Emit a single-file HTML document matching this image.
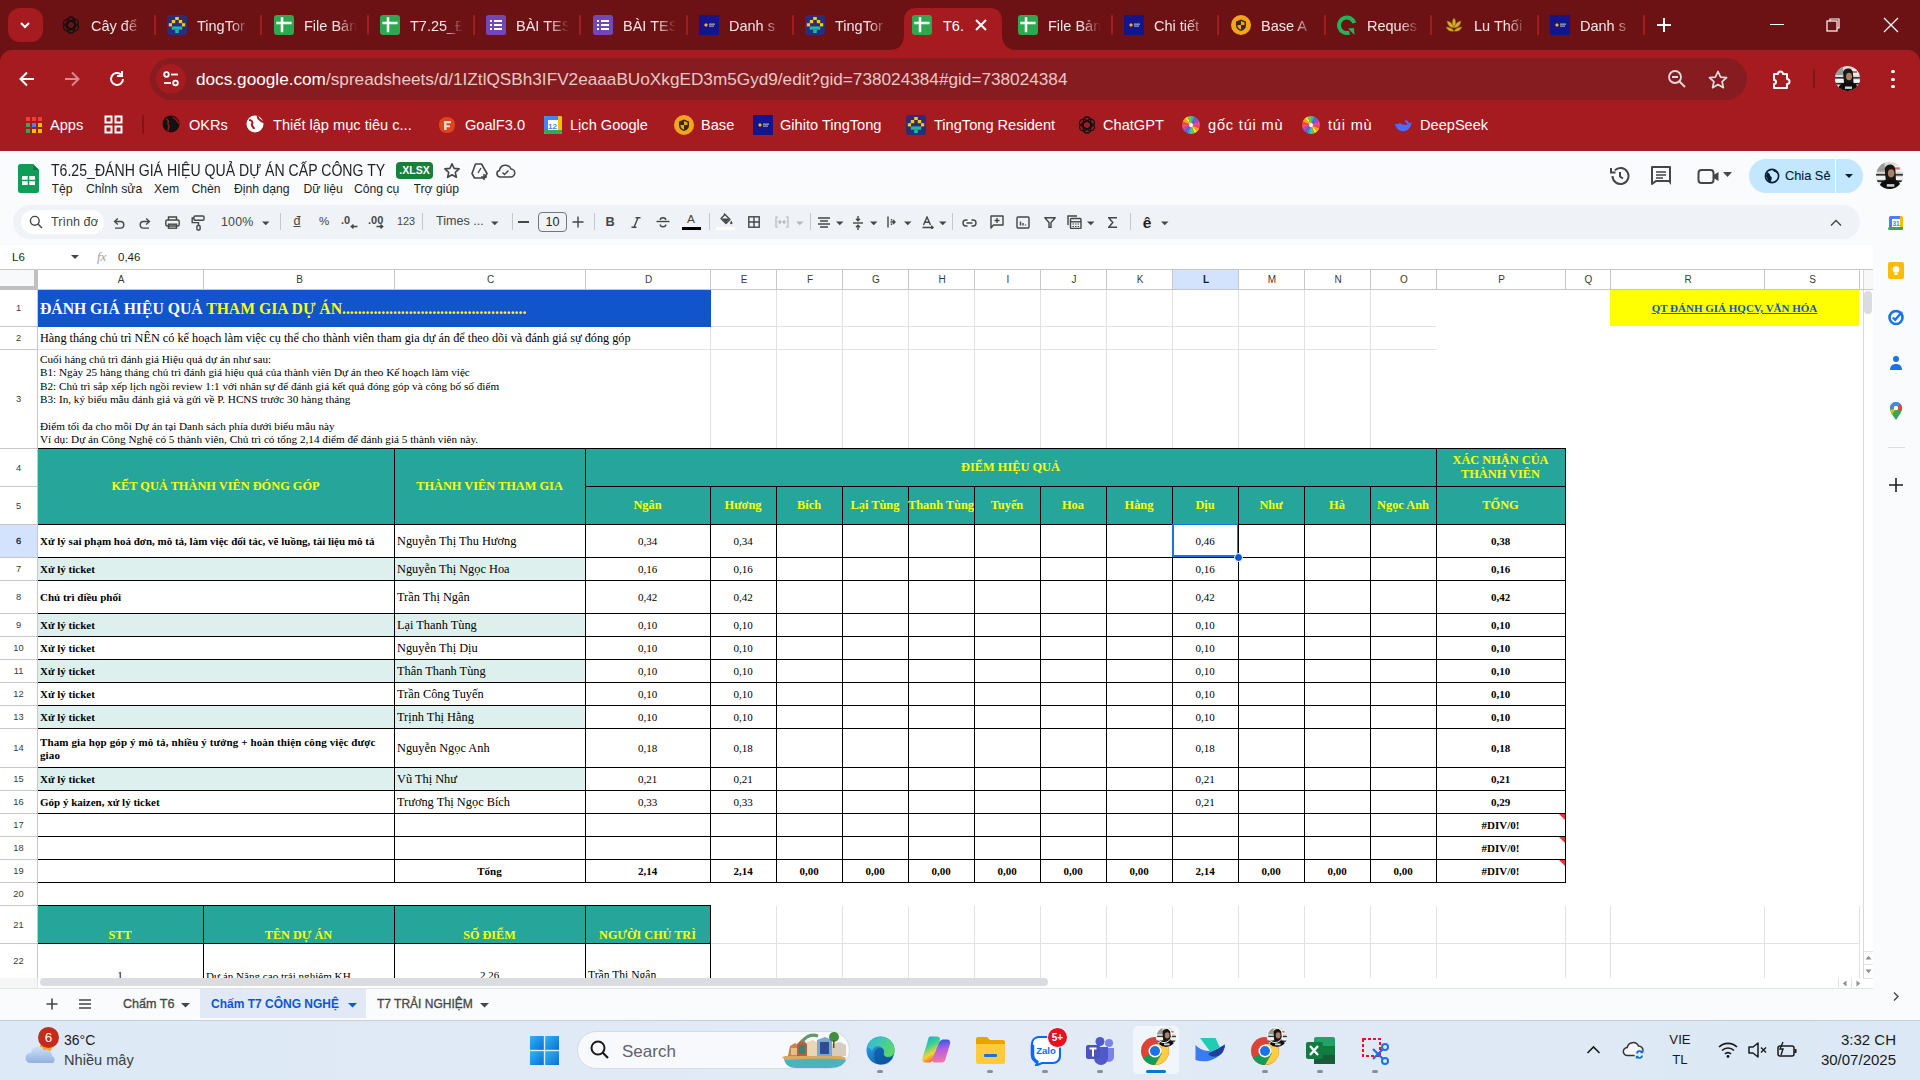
<!DOCTYPE html><html><head><meta charset="utf-8"><style>
*{margin:0;padding:0}
body{width:1920px;height:1080px;overflow:hidden;position:relative;background:#f9fbfd;font-family:SANS,sans-serif;color:#000}
.t{position:absolute;overflow:hidden;white-space:nowrap}
</style></head><body><div style="position:absolute;left:0px;top:0px;width:1920px;height:50px;background:#6d1214"></div>
<div style="position:absolute;left:0px;top:50px;width:1920px;height:101px;background:#a61b1f"></div>
<div style="position:absolute;left:8px;top:8px;width:35px;height:34px;background:#a61b1f;border-radius:12px"></div>
<svg style="position:absolute;left:18px;top:18px;" width="14" height="14" viewBox="0 0 14 14"><path d="M3 5l4 4 4-4" stroke="#fff" stroke-width="2" fill="none"/></svg>
<svg style="position:absolute;left:888.5px;top:7px;" width="128" height="44" viewBox="0 0 128 44"><path d="M0 43 Q14 43 15 29 L15 14 Q15 1 28 1 L100 1 Q113 1 113 14 L113 29 Q114 43 128 43 Z" fill="#a61b1f"/></svg>
<svg style="position:absolute;left:61px;top:15px;" width="20" height="20" viewBox="0 0 20 20"><g fill="none" stroke="#141010" stroke-width="1.3"><rect x="6.3" y="2" width="7.4" height="12" rx="3.7" transform="rotate(0 10 10)"/><rect x="6.3" y="2" width="7.4" height="12" rx="3.7" transform="rotate(60 10 10)"/><rect x="6.3" y="2" width="7.4" height="12" rx="3.7" transform="rotate(120 10 10)"/><rect x="6.3" y="2" width="7.4" height="12" rx="3.7" transform="rotate(180 10 10)"/><rect x="6.3" y="2" width="7.4" height="12" rx="3.7" transform="rotate(240 10 10)"/><rect x="6.3" y="2" width="7.4" height="12" rx="3.7" transform="rotate(300 10 10)"/></g></svg>
<div class="t" style="left:91px;top:8px;width:54px;height:36px;color:#f3e5e5;font:14.5px/36px 'Liberation Sans';-webkit-mask-image:linear-gradient(90deg,#000 62%,transparent 98%)">Cây để</div>
<div style="position:absolute;left:154px;top:15px;width:2px;height:20px;background:#a51c1f;border-radius:1px"></div>
<svg style="position:absolute;left:167px;top:15px;" width="20" height="20" viewBox="0 0 20 20"><rect width="20" height="20" rx="3" fill="#2b2d78"/><g fill="#f7c81e"><rect x="8.2" y="2" width="3.6" height="3"/><rect x="4.8" y="5" width="3.4" height="3.2"/><rect x="11.8" y="5" width="3.4" height="3.2"/><rect x="1.8" y="8.2" width="3.2" height="3.2"/><rect x="15" y="8.2" width="3.2" height="3.2"/></g><rect x="4.8" y="11.4" width="10.4" height="3.3" fill="#22b5a5"/><rect x="8.2" y="14.7" width="3.6" height="3.3" fill="#22b5a5"/></svg>
<div class="t" style="left:197px;top:8px;width:54px;height:36px;color:#f3e5e5;font:14.5px/36px 'Liberation Sans';-webkit-mask-image:linear-gradient(90deg,#000 62%,transparent 98%)">TingTor</div>
<div style="position:absolute;left:260px;top:15px;width:2px;height:20px;background:#a51c1f;border-radius:1px"></div>
<svg style="position:absolute;left:274px;top:15px;" width="20" height="20" viewBox="0 0 20 20"><rect width="20" height="20" rx="3" fill="#2ea84f"/><path d="M8 2.3v15M2.3 7.9h15.3" stroke="#fff" stroke-width="2.5"/></svg>
<div class="t" style="left:304px;top:8px;width:54px;height:36px;color:#f3e5e5;font:14.5px/36px 'Liberation Sans';-webkit-mask-image:linear-gradient(90deg,#000 62%,transparent 98%)">File Bản</div>
<div style="position:absolute;left:367px;top:15px;width:2px;height:20px;background:#a51c1f;border-radius:1px"></div>
<svg style="position:absolute;left:380px;top:15px;" width="20" height="20" viewBox="0 0 20 20"><rect width="20" height="20" rx="3" fill="#2ea84f"/><path d="M8 2.3v15M2.3 7.9h15.3" stroke="#fff" stroke-width="2.5"/></svg>
<div class="t" style="left:410px;top:8px;width:54px;height:36px;color:#f3e5e5;font:14.5px/36px 'Liberation Sans';-webkit-mask-image:linear-gradient(90deg,#000 62%,transparent 98%)">T7.25_Đ</div>
<div style="position:absolute;left:473px;top:15px;width:2px;height:20px;background:#a51c1f;border-radius:1px"></div>
<svg style="position:absolute;left:486px;top:15px;" width="20" height="20" viewBox="0 0 20 20"><rect width="20" height="20" rx="2.5" fill="#7248b9"/><g fill="#fff"><rect x="4" y="5" width="2" height="2"/><rect x="4" y="9" width="2" height="2"/><rect x="4" y="13" width="2" height="2"/><rect x="8" y="5" width="8" height="2"/><rect x="8" y="9" width="8" height="2"/><rect x="8" y="13" width="8" height="2"/></g></svg>
<div class="t" style="left:516px;top:8px;width:54px;height:36px;color:#f3e5e5;font:14.5px/36px 'Liberation Sans';-webkit-mask-image:linear-gradient(90deg,#000 62%,transparent 98%)">BÀI TES</div>
<div style="position:absolute;left:579px;top:15px;width:2px;height:20px;background:#a51c1f;border-radius:1px"></div>
<svg style="position:absolute;left:593px;top:15px;" width="20" height="20" viewBox="0 0 20 20"><rect width="20" height="20" rx="2.5" fill="#7248b9"/><g fill="#fff"><rect x="4" y="5" width="2" height="2"/><rect x="4" y="9" width="2" height="2"/><rect x="4" y="13" width="2" height="2"/><rect x="8" y="5" width="8" height="2"/><rect x="8" y="9" width="8" height="2"/><rect x="8" y="13" width="8" height="2"/></g></svg>
<div class="t" style="left:623px;top:8px;width:54px;height:36px;color:#f3e5e5;font:14.5px/36px 'Liberation Sans';-webkit-mask-image:linear-gradient(90deg,#000 62%,transparent 98%)">BÀI TES</div>
<div style="position:absolute;left:686px;top:15px;width:2px;height:20px;background:#a51c1f;border-radius:1px"></div>
<svg style="position:absolute;left:699px;top:15px;" width="20" height="20" viewBox="0 0 20 20"><rect width="20" height="20" fill="#14148c"/><path d="M5 10l2-2 2 2-2 2z" fill="#f5b700"/><rect x="10" y="8.5" width="6" height="1.3" fill="#9ab"/><rect x="10" y="10.5" width="5" height="1.2" fill="#9ab"/></svg>
<div class="t" style="left:729px;top:8px;width:54px;height:36px;color:#f3e5e5;font:14.5px/36px 'Liberation Sans';-webkit-mask-image:linear-gradient(90deg,#000 62%,transparent 98%)">Danh s</div>
<div style="position:absolute;left:792px;top:15px;width:2px;height:20px;background:#a51c1f;border-radius:1px"></div>
<svg style="position:absolute;left:805px;top:15px;" width="20" height="20" viewBox="0 0 20 20"><rect width="20" height="20" rx="3" fill="#2b2d78"/><g fill="#f7c81e"><rect x="8.2" y="2" width="3.6" height="3"/><rect x="4.8" y="5" width="3.4" height="3.2"/><rect x="11.8" y="5" width="3.4" height="3.2"/><rect x="1.8" y="8.2" width="3.2" height="3.2"/><rect x="15" y="8.2" width="3.2" height="3.2"/></g><rect x="4.8" y="11.4" width="10.4" height="3.3" fill="#22b5a5"/><rect x="8.2" y="14.7" width="3.6" height="3.3" fill="#22b5a5"/></svg>
<div class="t" style="left:835px;top:8px;width:54px;height:36px;color:#f3e5e5;font:14.5px/36px 'Liberation Sans';-webkit-mask-image:linear-gradient(90deg,#000 62%,transparent 98%)">TingTor</div>
<svg style="position:absolute;left:912px;top:15px;" width="20" height="20" viewBox="0 0 20 20"><rect width="20" height="20" rx="3" fill="#2ea84f"/><path d="M8 2.3v15M2.3 7.9h15.3" stroke="#fff" stroke-width="2.5"/></svg>
<div class="t" style="left:943px;top:8px;width:40px;height:36px;color:#fff;font:14.5px/36px 'Liberation Sans'">T6.</div>
<svg style="position:absolute;left:974px;top:18px;" width="14" height="14" viewBox="0 0 14 14"><path d="M2 2L12 12M12 2L2 12" stroke="#fff" stroke-width="2"/></svg>
<svg style="position:absolute;left:1018px;top:15px;" width="20" height="20" viewBox="0 0 20 20"><rect width="20" height="20" rx="3" fill="#2ea84f"/><path d="M8 2.3v15M2.3 7.9h15.3" stroke="#fff" stroke-width="2.5"/></svg>
<div class="t" style="left:1048px;top:8px;width:54px;height:36px;color:#f3e5e5;font:14.5px/36px 'Liberation Sans';-webkit-mask-image:linear-gradient(90deg,#000 62%,transparent 98%)">File Bản</div>
<div style="position:absolute;left:1111px;top:15px;width:2px;height:20px;background:#a51c1f;border-radius:1px"></div>
<svg style="position:absolute;left:1124px;top:15px;" width="20" height="20" viewBox="0 0 20 20"><rect width="20" height="20" fill="#14148c"/><path d="M5 10l2-2 2 2-2 2z" fill="#f5b700"/><rect x="10" y="8.5" width="6" height="1.3" fill="#9ab"/><rect x="10" y="10.5" width="5" height="1.2" fill="#9ab"/></svg>
<div class="t" style="left:1154px;top:8px;width:54px;height:36px;color:#f3e5e5;font:14.5px/36px 'Liberation Sans';-webkit-mask-image:linear-gradient(90deg,#000 62%,transparent 98%)">Chi tiết</div>
<div style="position:absolute;left:1217px;top:15px;width:2px;height:20px;background:#a51c1f;border-radius:1px"></div>
<svg style="position:absolute;left:1231px;top:15px;" width="20" height="20" viewBox="0 0 20 20"><circle cx="10" cy="10" r="10" fill="#f7a41d"/><path d="M10 4.5l5 2v4c0 3-2.3 4.6-5 5.5-2.7-.9-5-2.5-5-5.5v-4z" fill="#3a2a10"/><path d="M10 6l3.5 1.4V10H10zM10 10v4.6C8 14 6.5 12.6 6.5 10.5V10z" fill="#f7a41d"/></svg>
<div class="t" style="left:1261px;top:8px;width:54px;height:36px;color:#f3e5e5;font:14.5px/36px 'Liberation Sans';-webkit-mask-image:linear-gradient(90deg,#000 62%,transparent 98%)">Base A</div>
<div style="position:absolute;left:1324px;top:15px;width:2px;height:20px;background:#a51c1f;border-radius:1px"></div>
<svg style="position:absolute;left:1337px;top:15px;" width="20" height="20" viewBox="0 0 20 20"><path d="M12.5 17.6A7.8 7.8 0 1 1 17.3 8" stroke="#1fb55a" stroke-width="4" fill="none"/><path d="M11 13.5l6.5 6.5-0.5-7z" fill="#1fb55a"/></svg>
<div class="t" style="left:1367px;top:8px;width:54px;height:36px;color:#f3e5e5;font:14.5px/36px 'Liberation Sans';-webkit-mask-image:linear-gradient(90deg,#000 62%,transparent 98%)">Reques</div>
<div style="position:absolute;left:1430px;top:15px;width:2px;height:20px;background:#a51c1f;border-radius:1px"></div>
<svg style="position:absolute;left:1444px;top:15px;" width="20" height="20" viewBox="0 0 20 20"><g fill="#d4ac2b" stroke="#8a6d12" stroke-width="0.5"><path d="M10 3c2 2.5 2.5 6 0 10-2.5-4-2-7.5 0-10z"/><path d="M3 6c3.5.5 6 3 7 7-4-.3-6.5-3-7-7z"/><path d="M17 6c-3.5.5-6 3-7 7 4-.3 6.5-3 7-7z"/><path d="M2 12c3 0 6 1 8 4-3.5 1-6.5-.5-8-4z"/><path d="M18 12c-3 0-6 1-8 4 3.5 1 6.5-.5 8-4z"/></g></svg>
<div class="t" style="left:1474px;top:8px;width:54px;height:36px;color:#f3e5e5;font:14.5px/36px 'Liberation Sans';-webkit-mask-image:linear-gradient(90deg,#000 62%,transparent 98%)">Lu Thối</div>
<div style="position:absolute;left:1537px;top:15px;width:2px;height:20px;background:#a51c1f;border-radius:1px"></div>
<svg style="position:absolute;left:1550px;top:15px;" width="20" height="20" viewBox="0 0 20 20"><rect width="20" height="20" fill="#14148c"/><path d="M5 10l2-2 2 2-2 2z" fill="#f5b700"/><rect x="10" y="8.5" width="6" height="1.3" fill="#9ab"/><rect x="10" y="10.5" width="5" height="1.2" fill="#9ab"/></svg>
<div class="t" style="left:1580px;top:8px;width:54px;height:36px;color:#f3e5e5;font:14.5px/36px 'Liberation Sans';-webkit-mask-image:linear-gradient(90deg,#000 62%,transparent 98%)">Danh s</div>
<div style="position:absolute;left:1643px;top:15px;width:2px;height:20px;background:#a51c1f;border-radius:1px"></div>
<svg style="position:absolute;left:1655px;top:16px;" width="18" height="18" viewBox="0 0 18 18"><path d="M9 2v14M2 9h14" stroke="#fff" stroke-width="2"/></svg>
<div style="position:absolute;left:1770px;top:24px;width:14px;height:1.2px;background:#fff"></div>
<svg style="position:absolute;left:1825px;top:17px;" width="16" height="16" viewBox="0 0 16 16"><rect x="2" y="4" width="10" height="10" fill="none" stroke="#fff" stroke-width="1.2"/><path d="M5 4V2h9v9h-2" fill="none" stroke="#fff" stroke-width="1.2"/></svg>
<svg style="position:absolute;left:1883px;top:17px;" width="16" height="16" viewBox="0 0 16 16"><path d="M1 1L15 15M15 1L1 15" stroke="#fff" stroke-width="1.3"/></svg>
<div style="position:absolute;left:0px;top:50px;width:12px;height:12px;background:#6d1214"></div>
<div style="position:absolute;left:0px;top:50px;width:12px;height:12px;background:#a61b1f;border-top-left-radius:12px"></div>
<div style="position:absolute;left:1908px;top:50px;width:12px;height:12px;background:#6d1214"></div>
<div style="position:absolute;left:1908px;top:50px;width:12px;height:12px;background:#a61b1f;border-top-right-radius:12px"></div>
<svg style="position:absolute;left:17px;top:69px;" width="20" height="20" viewBox="0 0 20 20"><path d="M17 10H4M10 3.5L3.5 10 10 16.5" stroke="#fff" stroke-width="2" fill="none"/></svg>
<svg style="position:absolute;left:62px;top:69px;" width="20" height="20" viewBox="0 0 20 20"><path d="M3 10h13M10 3.5L16.5 10 10 16.5" stroke="#d98a8a" stroke-width="2" fill="none"/></svg>
<svg style="position:absolute;left:107px;top:69px;" width="20" height="20" viewBox="0 0 20 20"><path d="M16 10a6 6 0 1 1-2-4.5" stroke="#fff" stroke-width="2" fill="none"/><path d="M15 2v5h-5" stroke="#fff" stroke-width="2" fill="none"/></svg>
<div style="position:absolute;left:150px;top:58px;width:1597px;height:42px;background:#861c1f;border-radius:21px"></div>
<div style="position:absolute;left:156px;top:64px;width:30px;height:30px;background:#a61b1f;border-radius:50%"></div>
<svg style="position:absolute;left:162px;top:70px;" width="18" height="18" viewBox="0 0 18 18"><circle cx="4.5" cy="4.5" r="2.3" stroke="#fff" stroke-width="1.8" fill="none"/><path d="M9 4.5h7" stroke="#fff" stroke-width="1.8"/><circle cx="13.5" cy="13" r="2.3" stroke="#fff" stroke-width="1.8" fill="none"/><path d="M2 13h7" stroke="#fff" stroke-width="1.8"/></svg>
<div class="t" style="left:196px;top:58px;width:1000px;height:42px;color:#e6c8c8;font:17.2px/42px 'Liberation Sans'"><span style="color:#fff">docs.google.com</span>/spreadsheets/d/1IZtlQSBh3IFV2eaaaBUoXkgED3m5Gyd9/edit?gid=738024384#gid=738024384</div>
<svg style="position:absolute;left:1667px;top:69px;" width="22" height="22" viewBox="0 0 22 22"><circle cx="8" cy="8" r="6" stroke="#ddd" stroke-width="1.8" fill="none"/><path d="M5 8h6M12.5 12.5L18 18" stroke="#ddd" stroke-width="1.8"/></svg>
<svg style="position:absolute;left:1707px;top:69px;" width="22" height="22" viewBox="0 0 22 22"><path d="M11 2.5l2.6 5.6 6 .6-4.5 4 1.3 6-5.4-3.2-5.4 3.2 1.3-6-4.5-4 6-.6z" stroke="#ddd" stroke-width="1.7" fill="none" stroke-linejoin="round"/></svg>
<svg style="position:absolute;left:1770px;top:68px;" width="24" height="24" viewBox="0 0 24 24"><path d="M4 6h4a2.5 2.5 0 0 1 5 0h4v5a2.5 2.5 0 0 1 0 5v4H4v-4a2 2 0 0 0 0-4z" stroke="#fff" stroke-width="2" fill="none" stroke-linejoin="round"/></svg>
<div style="position:absolute;left:1813px;top:69px;width:2px;height:19px;background:#7a1518;border-radius:1px"></div>
<svg style="position:absolute;left:1835px;top:66px;" width="25.0" height="25.0" viewBox="0 0 25 25"><defs><clipPath id="av1"><circle cx="12.5" cy="12.5" r="12.5"/></clipPath></defs><g clip-path="url(#av1)"><rect width="25" height="25" fill="#d9d9d9"/><rect x="0" y="0" width="8" height="9" fill="#9a9a9a"/><rect x="16" y="3" width="9" height="6" fill="#f0f0f0"/><rect x="17" y="5" width="5" height="2" fill="#d66"/><rect x="0" y="11" width="25" height="1.6" fill="#333"/><rect x="0" y="13" width="9" height="3" fill="#f2f2f2"/><rect x="17" y="14" width="8" height="2.5" fill="#f5f5f5"/><rect x="0" y="17" width="25" height="1.5" fill="#222"/><path d="M8 6c1-3 4-4 6.5-3.5 2.5.5 3.5 3 3.5 5.5l.5 9H9z" fill="#1b1613"/><ellipse cx="14" cy="10.5" rx="3" ry="3.8" fill="#a98068"/><path d="M3 25c0-5 3-8.5 8-8.5h5c5 0 7 3.5 7 8.5z" fill="#0e0e0e"/><rect x="10" y="20.5" width="7" height="2.4" fill="#d2d2d2"/></g></svg>
<div style="position:absolute;left:1891px;top:69.5px;width:3.5px;height:3.5px;background:#fff;border-radius:50%"></div>
<div style="position:absolute;left:1891px;top:77.5px;width:3.5px;height:3.5px;background:#fff;border-radius:50%"></div>
<div style="position:absolute;left:1891px;top:84.5px;width:3.5px;height:3.5px;background:#fff;border-radius:50%"></div>
<svg style="position:absolute;left:25px;top:116px;" width="18" height="18" viewBox="0 0 18 18"><rect x="1" y="1" width="4" height="4" fill="#ea4335"/><rect x="7" y="1" width="4" height="4" fill="#ea4335"/><rect x="13" y="1" width="4" height="4" fill="#ea4335"/><rect x="1" y="7" width="4" height="4" fill="#34a853"/><rect x="7" y="7" width="4" height="4" fill="#4285f4"/><rect x="13" y="7" width="4" height="4" fill="#fbbc04"/><rect x="1" y="13" width="4" height="4" fill="#34a853"/><rect x="7" y="13" width="4" height="4" fill="#fbbc04"/><rect x="13" y="13" width="4" height="4" fill="#fbbc04"/></svg>
<div class="t" style="left:50px;top:110px;width:200px;height:30px;color:#fff;font:14.6px/30px 'Liberation Sans'">Apps</div>
<svg style="position:absolute;left:104px;top:115px;" width="19" height="19" viewBox="0 0 19 19"><g fill="none" stroke="#fff" stroke-width="2"><rect x="1.5" y="1.5" width="6" height="6"/><rect x="11.5" y="1.5" width="6" height="6"/><rect x="1.5" y="11.5" width="6" height="6"/><rect x="11.5" y="11.5" width="6" height="6"/></g></svg>
<svg style="position:absolute;left:162px;top:115px;" width="18" height="18" viewBox="0 0 18 18"><circle cx="9" cy="9" r="8.5" fill="#111"/><path d="M4 4c2 1 3 2 2 4s2 2 1 4-1 3-1 4M11 1.5c0 2 2 2 3 3s1 3 3 3.5" stroke="#a61b1f" stroke-width="1.3" fill="none"/></svg>
<div class="t" style="left:189px;top:110px;width:200px;height:30px;color:#fff;font:14.6px/30px 'Liberation Sans'">OKRs</div>
<svg style="position:absolute;left:246px;top:115px;" width="18" height="18" viewBox="0 0 18 18"><circle cx="9" cy="9" r="8.5" fill="#fff"/><path d="M3 5c3 0 4 2 3 4s2 3 2 5M12 1c-1 2 1 3 2 4s3 2 4 2" stroke="#a61b1f" stroke-width="2" fill="none"/></svg>
<div class="t" style="left:273px;top:110px;width:200px;height:30px;color:#fff;font:14.6px/30px 'Liberation Sans'">Thiết lập mục tiêu c...</div>
<svg style="position:absolute;left:437px;top:115px;" width="20" height="20" viewBox="0 0 20 20"><path d="M10 2c5 0 8 3 8 8s-3 8-8 8-8-3-8-8 3-8 8-8z" fill="#e2431f"/><path d="M7 6h7v2.2H9.5v2H13v2H9.5V15H7z" fill="#ffd9c9"/></svg>
<div class="t" style="left:465px;top:110px;width:200px;height:30px;color:#fff;font:14.6px/30px 'Liberation Sans'">GoalF3.0</div>
<svg style="position:absolute;left:543px;top:115px;" width="20" height="20" viewBox="0 0 20 20"><rect x="1" y="1" width="18" height="18" rx="2" fill="#fff"/><path d="M1 15h18v2a2 2 0 0 1-2 2H3a2 2 0 0 1-2-2z" fill="#34a853"/><path d="M15 1h2a2 2 0 0 1 2 2v12h-4z" fill="#fbbc04"/><path d="M1 3a2 2 0 0 1 2-2h12v4H1z" fill="#4285f4"/><path d="M1 5h4v10H1z" fill="#4285f4"/><text x="9.5" y="14" font-size="8" font-family="Liberation Sans" fill="#4285f4" text-anchor="middle" font-weight="bold">12</text></svg>
<div class="t" style="left:570px;top:110px;width:200px;height:30px;color:#fff;font:14.6px/30px 'Liberation Sans'">Lịch Google</div>
<svg style="position:absolute;left:674px;top:115px;" width="20" height="20" viewBox="0 0 20 20"><circle cx="10" cy="10" r="10" fill="#f7a41d"/><path d="M10 4.5l5 2v4c0 3-2.3 4.6-5 5.5-2.7-.9-5-2.5-5-5.5v-4z" fill="#3a2a10"/><path d="M10 6l3.5 1.4V10H10zM10 10v4.6C8 14 6.5 12.6 6.5 10.5V10z" fill="#f7a41d"/></svg>
<div class="t" style="left:701px;top:110px;width:200px;height:30px;color:#fff;font:14.6px/30px 'Liberation Sans'">Base</div>
<svg style="position:absolute;left:753px;top:115px;" width="20" height="20" viewBox="0 0 20 20"><rect width="20" height="20" fill="#14148c"/><path d="M5 10l2-2 2 2-2 2z" fill="#f5b700"/><rect x="10" y="8.5" width="6" height="1.3" fill="#9ab"/><rect x="10" y="10.5" width="5" height="1.2" fill="#9ab"/></svg>
<div class="t" style="left:780px;top:110px;width:200px;height:30px;color:#fff;font:14.6px/30px 'Liberation Sans'">Gihito TingTong</div>
<svg style="position:absolute;left:906px;top:115px;" width="20" height="20" viewBox="0 0 20 20"><rect width="20" height="20" rx="3" fill="#2b2d78"/><g fill="#f7c81e"><rect x="8.2" y="2" width="3.6" height="3"/><rect x="4.8" y="5" width="3.4" height="3.2"/><rect x="11.8" y="5" width="3.4" height="3.2"/><rect x="1.8" y="8.2" width="3.2" height="3.2"/><rect x="15" y="8.2" width="3.2" height="3.2"/></g><rect x="4.8" y="11.4" width="10.4" height="3.3" fill="#22b5a5"/><rect x="8.2" y="14.7" width="3.6" height="3.3" fill="#22b5a5"/></svg>
<div class="t" style="left:934px;top:110px;width:200px;height:30px;color:#fff;font:14.6px/30px 'Liberation Sans'">TingTong Resident</div>
<svg style="position:absolute;left:1077px;top:115px;" width="20" height="20" viewBox="0 0 20 20"><g fill="none" stroke="#141010" stroke-width="1.3"><rect x="6.3" y="2" width="7.4" height="12" rx="3.7" transform="rotate(0 10 10)"/><rect x="6.3" y="2" width="7.4" height="12" rx="3.7" transform="rotate(60 10 10)"/><rect x="6.3" y="2" width="7.4" height="12" rx="3.7" transform="rotate(120 10 10)"/><rect x="6.3" y="2" width="7.4" height="12" rx="3.7" transform="rotate(180 10 10)"/><rect x="6.3" y="2" width="7.4" height="12" rx="3.7" transform="rotate(240 10 10)"/><rect x="6.3" y="2" width="7.4" height="12" rx="3.7" transform="rotate(300 10 10)"/></g></svg>
<div class="t" style="left:1103px;top:110px;width:200px;height:30px;color:#fff;font:14.6px/30px 'Liberation Sans'">ChatGPT</div>
<svg style="position:absolute;left:1181px;top:115px;" width="20" height="20" viewBox="0 0 20 20"><path d="M10 10L19.00 10.00A9 9 0 0 1 18.31 13.44z" fill="#e94b3c"/><path d="M10 10L18.31 13.44A9 9 0 0 1 16.36 16.36z" fill="#f7a21b"/><path d="M10 10L16.36 16.36A9 9 0 0 1 13.44 18.31z" fill="#f9e03b"/><path d="M10 10L13.44 18.31A9 9 0 0 1 10.00 19.00z" fill="#7cc242"/><path d="M10 10L10.00 19.00A9 9 0 0 1 6.56 18.31z" fill="#2bb8c5"/><path d="M10 10L6.56 18.31A9 9 0 0 1 3.64 16.36z" fill="#4d6fd8"/><path d="M10 10L3.64 16.36A9 9 0 0 1 1.69 13.44z" fill="#a24fd3"/><path d="M10 10L1.69 13.44A9 9 0 0 1 1.00 10.00z" fill="#e84c9c"/><path d="M10 10L1.00 10.00A9 9 0 0 1 1.69 6.56z" fill="#e94b3c"/><path d="M10 10L1.69 6.56A9 9 0 0 1 3.64 3.64z" fill="#f7a21b"/><path d="M10 10L3.64 3.64A9 9 0 0 1 6.56 1.69z" fill="#f9e03b"/><path d="M10 10L6.56 1.69A9 9 0 0 1 10.00 1.00z" fill="#7cc242"/><path d="M10 10L10.00 1.00A9 9 0 0 1 13.44 1.69z" fill="#2bb8c5"/><path d="M10 10L13.44 1.69A9 9 0 0 1 16.36 3.64z" fill="#4d6fd8"/><path d="M10 10L16.36 3.64A9 9 0 0 1 18.31 6.56z" fill="#a24fd3"/><path d="M10 10L18.31 6.56A9 9 0 0 1 19.00 10.00z" fill="#e84c9c"/><circle cx="10" cy="10" r="2" fill="#fff"/></svg>
<div class="t" style="left:1208px;top:110px;width:200px;height:30px;color:#fff;font:14.6px/30px 'Liberation Sans';letter-spacing:0.8px">gốc túi mù</div>
<svg style="position:absolute;left:1301px;top:115px;" width="20" height="20" viewBox="0 0 20 20"><path d="M10 10L19.00 10.00A9 9 0 0 1 18.31 13.44z" fill="#e94b3c"/><path d="M10 10L18.31 13.44A9 9 0 0 1 16.36 16.36z" fill="#f7a21b"/><path d="M10 10L16.36 16.36A9 9 0 0 1 13.44 18.31z" fill="#f9e03b"/><path d="M10 10L13.44 18.31A9 9 0 0 1 10.00 19.00z" fill="#7cc242"/><path d="M10 10L10.00 19.00A9 9 0 0 1 6.56 18.31z" fill="#2bb8c5"/><path d="M10 10L6.56 18.31A9 9 0 0 1 3.64 16.36z" fill="#4d6fd8"/><path d="M10 10L3.64 16.36A9 9 0 0 1 1.69 13.44z" fill="#a24fd3"/><path d="M10 10L1.69 13.44A9 9 0 0 1 1.00 10.00z" fill="#e84c9c"/><path d="M10 10L1.00 10.00A9 9 0 0 1 1.69 6.56z" fill="#e94b3c"/><path d="M10 10L1.69 6.56A9 9 0 0 1 3.64 3.64z" fill="#f7a21b"/><path d="M10 10L3.64 3.64A9 9 0 0 1 6.56 1.69z" fill="#f9e03b"/><path d="M10 10L6.56 1.69A9 9 0 0 1 10.00 1.00z" fill="#7cc242"/><path d="M10 10L10.00 1.00A9 9 0 0 1 13.44 1.69z" fill="#2bb8c5"/><path d="M10 10L13.44 1.69A9 9 0 0 1 16.36 3.64z" fill="#4d6fd8"/><path d="M10 10L16.36 3.64A9 9 0 0 1 18.31 6.56z" fill="#a24fd3"/><path d="M10 10L18.31 6.56A9 9 0 0 1 19.00 10.00z" fill="#e84c9c"/><circle cx="10" cy="10" r="2" fill="#fff"/></svg>
<div class="t" style="left:1328px;top:110px;width:200px;height:30px;color:#fff;font:14.6px/30px 'Liberation Sans';letter-spacing:0.8px">túi mù</div>
<svg style="position:absolute;left:1393px;top:115px;" width="20" height="20" viewBox="0 0 20 20"><path d="M2 9c1 5 5 8 10 7 3-.5 5-3 6-6l1-3c-1 1-2 1-3 1-1-2-2-3-4-3 0 2 1 3 2 4-2 1-5 1-7-1-1 1-3 1-5 1z" fill="#4d6bfe"/><circle cx="13" cy="9" r="1" fill="#a61b1f"/></svg>
<div class="t" style="left:1420px;top:110px;width:200px;height:30px;color:#fff;font:14.6px/30px 'Liberation Sans'">DeepSeek</div>
<div style="position:absolute;left:142px;top:115px;width:2px;height:19px;background:#7a1518;border-radius:1px"></div>
<div style="position:absolute;left:0px;top:151px;width:1920px;height:869px;background:#f9fbfd"></div>
<svg style="position:absolute;left:18px;top:164px;" width="21" height="29" viewBox="0 0 21 29"><path d="M0 2.5A2.5 2.5 0 0 1 2.5 0H15l6 6v20.5a2.5 2.5 0 0 1-2.5 2.5h-16A2.5 2.5 0 0 1 0 26.5z" fill="#0f9d58"/><path d="M15 0l6 6h-6z" fill="#087f40"/><rect x="4" y="12" width="13" height="9" fill="#fff"/><path d="M4 16.5h13M10.5 12v9" stroke="#0f9d58" stroke-width="1.6"/></svg>
<div class="t" style="left:51px;top:159px;width:360px;height:22px;color:#1f1f1f;font:14.1px/22px 'Liberation Sans';transform:scaleY(1.12);transform-origin:0 50%">T6.25_ĐÁNH GIÁ HIỆU QUẢ DỰ ÁN CẤP CÔNG TY</div>
<div style="position:absolute;left:396px;top:162px;width:37px;height:17px;background:#188038;border-radius:4px"></div>
<div class="t" style="left:396px;top:162px;width:37px;height:17px;color:#fff;font:bold 10.5px/17px 'Liberation Sans';text-align:center">.XLSX</div>
<svg style="position:absolute;left:443px;top:162px;" width="18" height="18" viewBox="0 0 18 18"><path d="M9 1.8l2.1 4.6 5 .5-3.8 3.4 1.1 5-4.4-2.6-4.4 2.6 1.1-5L1.9 6.9l5-.5z" stroke="#444746" stroke-width="1.6" fill="none" stroke-linejoin="round"/></svg>
<svg style="position:absolute;left:469px;top:161px;" width="20" height="20" viewBox="0 0 20 20"><path d="M6.5 3h6l5.5 9.5-2.5 4.5h-10L3 12.5z" stroke="#444746" stroke-width="1.6" fill="none" stroke-linejoin="round"/><path d="M9 12l3 -5" stroke="#444746" stroke-width="1.4"/><path d="M15 13v6M12 16h6" stroke="#444746" stroke-width="1.6"/></svg>
<svg style="position:absolute;left:495px;top:162px;" width="21" height="18" viewBox="0 0 21 18"><path d="M5.5 15h10a4 4 0 0 0 .5-8A6 6 0 0 0 4.5 8.5 3.3 3.3 0 0 0 5.5 15z" stroke="#444746" stroke-width="1.6" fill="none"/><path d="M7.5 10.5l2 2 4-4" stroke="#444746" stroke-width="1.5" fill="none"/></svg>
<div class="t" style="left:51.5px;top:180px;width:100px;height:18px;color:#1f1f1f;font:12.2px/18px 'Liberation Sans'">Tệp</div>
<div class="t" style="left:86px;top:180px;width:100px;height:18px;color:#1f1f1f;font:12.2px/18px 'Liberation Sans'">Chỉnh sửa</div>
<div class="t" style="left:154px;top:180px;width:100px;height:18px;color:#1f1f1f;font:12.2px/18px 'Liberation Sans'">Xem</div>
<div class="t" style="left:191.5px;top:180px;width:100px;height:18px;color:#1f1f1f;font:12.2px/18px 'Liberation Sans'">Chèn</div>
<div class="t" style="left:234px;top:180px;width:100px;height:18px;color:#1f1f1f;font:12.2px/18px 'Liberation Sans'">Định dạng</div>
<div class="t" style="left:303.5px;top:180px;width:100px;height:18px;color:#1f1f1f;font:12.2px/18px 'Liberation Sans'">Dữ liệu</div>
<div class="t" style="left:354px;top:180px;width:100px;height:18px;color:#1f1f1f;font:12.2px/18px 'Liberation Sans'">Công cụ</div>
<div class="t" style="left:413.5px;top:180px;width:100px;height:18px;color:#1f1f1f;font:12.2px/18px 'Liberation Sans'">Trợ giúp</div>
<svg style="position:absolute;left:1608px;top:164px;" width="24" height="24" viewBox="0 0 24 24"><path d="M4.5 12a8 8 0 1 0 2.3-5.6" stroke="#444746" stroke-width="2" fill="none"/><path d="M3 4v4.5h4.5" stroke="#444746" stroke-width="2" fill="none"/><path d="M12 8v4.5l3 2" stroke="#444746" stroke-width="2" fill="none"/></svg>
<svg style="position:absolute;left:1650px;top:165px;" width="23" height="22" viewBox="0 0 23 22"><path d="M2 2h18v14H6l-4 3z" stroke="#444746" stroke-width="2" fill="none" stroke-linejoin="round"/><path d="M6 7h10M6 10h10M6 13h7" stroke="#444746" stroke-width="1.6"/><path d="M18 16l3 4V16" fill="#444746"/></svg>
<svg style="position:absolute;left:1697px;top:166px;" width="24" height="20" viewBox="0 0 24 20"><rect x="1.5" y="4" width="15" height="13" rx="3" stroke="#444746" stroke-width="2" fill="none"/><path d="M16.5 9l5-3v9l-5-3z" fill="#444746"/></svg>
<svg style="position:absolute;left:1723px;top:172px;" width="9" height="6" viewBox="0 0 9 6"><path d="M0 0h9L4.5 5z" fill="#444746"/></svg>
<div style="position:absolute;left:1749px;top:159px;width:114px;height:34px;background:#c2e7ff;border-radius:17px"></div>
<div style="position:absolute;left:1835px;top:159px;width:1px;height:34px;background:#f9fbfd"></div>
<svg style="position:absolute;left:1764px;top:168px;" width="16" height="16" viewBox="0 0 16 16"><circle cx="8" cy="8" r="6.6" stroke="#001d35" stroke-width="1.6" fill="none"/><path d="M3 4.5c1.5.3 2.8 1 3 2.5s1.8 1.5 1.8 3-1 2.5-1 4.5L4.5 13 2 8zM9.5 1.8c-.5 1.2.3 2 1.5 2.3s1.5 1.3 2.5 1.5l1 1.5-.5-3z" fill="#001d35"/></svg>
<div class="t" style="left:1785px;top:159px;width:50px;height:34px;color:#001d35;font:12.8px/34px 'Liberation Sans';-webkit-text-stroke:0.1px #001d35">Chia Sẻ</div>
<svg style="position:absolute;left:1845px;top:174px;" width="8" height="5" viewBox="0 0 8 5"><path d="M0 0h8L4 4z" fill="#001d35"/></svg>
<svg style="position:absolute;left:1876px;top:162px;" width="27.0" height="27.0" viewBox="0 0 25 25"><defs><clipPath id="av2"><circle cx="12.5" cy="12.5" r="12.5"/></clipPath></defs><g clip-path="url(#av2)"><rect width="25" height="25" fill="#d9d9d9"/><rect x="0" y="0" width="8" height="9" fill="#9a9a9a"/><rect x="16" y="3" width="9" height="6" fill="#f0f0f0"/><rect x="17" y="5" width="5" height="2" fill="#d66"/><rect x="0" y="11" width="25" height="1.6" fill="#333"/><rect x="0" y="13" width="9" height="3" fill="#f2f2f2"/><rect x="17" y="14" width="8" height="2.5" fill="#f5f5f5"/><rect x="0" y="17" width="25" height="1.5" fill="#222"/><path d="M8 6c1-3 4-4 6.5-3.5 2.5.5 3.5 3 3.5 5.5l.5 9H9z" fill="#1b1613"/><ellipse cx="14" cy="10.5" rx="3" ry="3.8" fill="#a98068"/><path d="M3 25c0-5 3-8.5 8-8.5h5c5 0 7 3.5 7 8.5z" fill="#0e0e0e"/><rect x="10" y="20.5" width="7" height="2.4" fill="#d2d2d2"/></g></svg>
<div style="position:absolute;left:13px;top:205px;width:1847px;height:34px;background:#eff2f7;border-radius:17px"></div>
<div style="position:absolute;left:21px;top:210px;width:83px;height:24px;background:#fff;border-radius:12px"></div>
<svg style="position:absolute;left:29px;top:215px;" width="14" height="14" viewBox="0 0 14 14"><circle cx="5.8" cy="5.8" r="4.4" stroke="#444746" fill="none" stroke-width="1.4" stroke-width="1.6"/><path d="M9 9l4 4" stroke="#444746" fill="none" stroke-width="1.4" stroke-width="1.8"/></svg>
<div class="t" style="left:51px;top:210px;width:47px;height:24px;color:#444746;font:12.6px/24px 'Liberation Sans'">Trình đơn</div>
<svg style="position:absolute;left:112px;top:217px;" width="13" height="12" viewBox="0 0 13 12"><path d="M3.5 4.5h5a3.3 3.3 0 0 1 0 6.6H3" stroke="#444746" fill="none" stroke-width="1.4"/><path d="M5.8 1.6L2.6 4.5l3.2 2.9" stroke="#444746" fill="none" stroke-width="1.4"/></svg>
<svg style="position:absolute;left:139px;top:217px;" width="13" height="12" viewBox="0 0 13 12"><path d="M9.5 4.5h-5a3.3 3.3 0 0 0 0 6.6H10" stroke="#444746" fill="none" stroke-width="1.4"/><path d="M7.2 1.6l3.2 2.9-3.2 2.9" stroke="#444746" fill="none" stroke-width="1.4"/></svg>
<svg style="position:absolute;left:165px;top:216px;" width="15" height="13" viewBox="0 0 15 13"><rect x="0.8" y="4" width="13.4" height="6" rx="1.5" stroke="#444746" fill="none" stroke-width="1.4"/><path d="M3.5 4V1h8v3" stroke="#444746" fill="none" stroke-width="1.4"/><rect x="3.5" y="8.2" width="8" height="4" stroke="#444746" fill="none" stroke-width="1.4" fill="#eff2f7"/></svg>
<svg style="position:absolute;left:191px;top:215px;" width="14" height="16" viewBox="0 0 14 16"><rect x="3" y="1" width="10" height="4.2" rx="1" stroke="#444746" fill="none" stroke-width="1.4"/><path d="M3 3H1.2v4.6h6.3v3" stroke="#444746" fill="none" stroke-width="1.4"/><rect x="5.9" y="10.5" width="3.2" height="4.5" rx="1" stroke="#444746" fill="none" stroke-width="1.4"/></svg>
<div class="t" style="left:221px;top:213px;width:40px;height:18px;color:#444746;font:12.4px/18px 'Liberation Sans';letter-spacing:0.2px">100%</div>
<svg style="position:absolute;left:261.5px;top:220.5px;" width="8" height="5" viewBox="0 0 8 5"><path d="M0 0.5h7.5L3.75 4.3z" fill="#444746"/></svg>
<div style="position:absolute;left:280px;top:213px;width:1px;height:17px;background:#c7c7c7"></div>
<div style="position:absolute;left:422px;top:213px;width:1px;height:17px;background:#c7c7c7"></div>
<div style="position:absolute;left:512px;top:213px;width:1px;height:17px;background:#c7c7c7"></div>
<div style="position:absolute;left:594px;top:213px;width:1px;height:17px;background:#c7c7c7"></div>
<div style="position:absolute;left:709px;top:213px;width:1px;height:17px;background:#c7c7c7"></div>
<div style="position:absolute;left:810px;top:213px;width:1px;height:17px;background:#c7c7c7"></div>
<div style="position:absolute;left:952px;top:213px;width:1px;height:17px;background:#c7c7c7"></div>
<div style="position:absolute;left:1130px;top:213px;width:1px;height:17px;background:#c7c7c7"></div>
<div class="t" style="left:288px;top:212px;width:18px;height:18px;color:#444746;font:12.6px/18px 'Liberation Sans';text-align:center"><u>đ</u></div>
<div class="t" style="left:316px;top:212px;width:16px;height:18px;color:#444746;font:11.5px/18px 'Liberation Sans';text-align:center">%</div>
<div class="t" style="left:341px;top:211px;width:14px;height:18px;color:#444746;font:bold 11px/18px 'Liberation Sans';">.0</div>
<svg style="position:absolute;left:350px;top:224px;" width="8" height="5" viewBox="0 0 8 5"><path d="M7.5 2.5H1.5M3.5 0.6L1.3 2.5 3.5 4.4" stroke="#444746" fill="none" stroke-width="1.4" stroke-width="1.2"/></svg>
<div class="t" style="left:368px;top:211px;width:20px;height:18px;color:#444746;font:bold 11px/18px 'Liberation Sans';">.00</div>
<svg style="position:absolute;left:376px;top:224px;" width="8" height="5" viewBox="0 0 8 5"><path d="M0.5 2.5h6M4.5 0.6L6.7 2.5 4.5 4.4" stroke="#444746" fill="none" stroke-width="1.4" stroke-width="1.2"/></svg>
<div class="t" style="left:397px;top:212px;width:18px;height:18px;color:#444746;font:10.8px/18px 'Liberation Sans';">123</div>
<div class="t" style="left:436px;top:212px;width:50px;height:18px;color:#444746;font:12.6px/18px 'Liberation Sans'">Times ...</div>
<svg style="position:absolute;left:491px;top:220.5px;" width="8" height="5" viewBox="0 0 8 5"><path d="M0 0.5h7.5L3.75 4.3z" fill="#444746"/></svg>
<div style="position:absolute;left:518px;top:221px;width:11px;height:1.5px;background:#444746"></div>
<div style="position:absolute;left:538px;top:212px;width:29px;height:20px;border:1px solid #747775;border-radius:4px;box-sizing:border-box"></div>
<div class="t" style="left:538px;top:212px;width:29px;height:20px;color:#1f1f1f;font:12.6px/20px 'Liberation Sans';text-align:center">10</div>
<svg style="position:absolute;left:572px;top:216px;" width="12" height="12" viewBox="0 0 12 12"><path d="M6 0.5v11M0.5 6h11" stroke="#444746" fill="none" stroke-width="1.4" stroke-width="1.5"/></svg>
<div class="t" style="left:603px;top:213px;width:14px;height:18px;color:#444746;font:bold 12.8px/18px 'Liberation Sans';text-align:center">B</div>
<svg style="position:absolute;left:631px;top:217px;" width="10" height="11" viewBox="0 0 10 11"><path d="M4.5 0.8h5M0.5 10.2h5M7 0.8L3 10.2" stroke="#444746" fill="none" stroke-width="1.4" stroke-width="1.6"/></svg>
<svg style="position:absolute;left:656px;top:217px;" width="14" height="11" viewBox="0 0 14 11"><path d="M0.5 4.5h13" stroke="#444746" fill="none" stroke-width="1.4"/><path d="M4.2 3A2.8 2.2 0 0 1 9.8 3M4.2 7.5a2.8 2.2 0 0 0 5.6 0" stroke="#444746" fill="none" stroke-width="1.4"/></svg>
<div class="t" style="left:684px;top:211px;width:14px;height:16px;color:#444746;font:11.8px/16px 'Liberation Sans';text-align:center">A</div>
<div style="position:absolute;left:682px;top:227px;width:19px;height:3px;background:#000"></div>
<svg style="position:absolute;left:719px;top:213px;" width="14" height="12" viewBox="0 0 14 12"><path d="M5 0.5l1.2 1.2M2 5.5L6 1.5l5 5-4 4z" stroke="#444746" fill="none" stroke-width="1.4" stroke-linejoin="round"/><path d="M2.3 5.5h8.5l-3.8 4z" fill="#444746"/><path d="M12.3 7.8c.8 1.1 1.2 1.8 1.2 2.3a1.2 1.2 0 0 1-2.4 0c0-.5.4-1.2 1.2-2.3z" fill="#444746"/></svg>
<div style="position:absolute;left:716px;top:227px;width:19px;height:3px;background:#fff"></div>
<svg style="position:absolute;left:748px;top:216px;" width="12" height="12" viewBox="0 0 12 12"><rect x="0.8" y="0.8" width="10.4" height="10.4" stroke="#444746" fill="none" stroke-width="1.4"/><path d="M6 0.8v10.4M0.8 6h10.4" stroke="#444746" fill="none" stroke-width="1.4"/></svg>
<svg style="position:absolute;left:775px;top:216px;" width="14" height="12" viewBox="0 0 14 12"><path d="M3 1H1v10h2M11 1h2v10h-2" stroke="#b4b7bb" fill="none" stroke-width="1.2"/><path d="M2.5 6h3M4.3 4.2L6 6 4.3 7.8M11.5 6h-3M9.7 4.2L8 6l1.7 1.8" stroke="#b4b7bb" fill="none" stroke-width="1.2"/></svg>
<svg style="position:absolute;left:796px;top:220.5px;" width="8" height="5" viewBox="0 0 8 5"><path d="M0 0.5h7.5L3.75 4.3z" fill="#b4b7bb"/></svg>
<svg style="position:absolute;left:818px;top:217px;" width="12" height="12" viewBox="0 0 12 12"><path d="M0 1h12M2 4h8M0 7h12M2 10h8" stroke="#444746" stroke-width="1.5"/></svg>
<svg style="position:absolute;left:835.5px;top:220.5px;" width="8" height="5" viewBox="0 0 8 5"><path d="M0 0.5h7.5L3.75 4.3z" fill="#444746"/></svg>
<svg style="position:absolute;left:853px;top:216px;" width="10" height="14" viewBox="0 0 10 14"><path d="M0 7h10" stroke="#444746" fill="none" stroke-width="1.4"/><path d="M5 0v4.5M3 2.8L5 4.8l2-2M5 14V9.5M3 11.2L5 9.2l2 2" stroke="#444746" fill="none" stroke-width="1.4" stroke-width="1.3"/></svg>
<svg style="position:absolute;left:869.5px;top:220.5px;" width="8" height="5" viewBox="0 0 8 5"><path d="M0 0.5h7.5L3.75 4.3z" fill="#444746"/></svg>
<svg style="position:absolute;left:887px;top:216px;" width="9" height="12" viewBox="0 0 9 12"><path d="M1 0.5v11M4.5 3v1.5M4.5 7.5V9M3.5 6H8M6 4l2 2-2 2" stroke="#444746" fill="none" stroke-width="1.4" stroke-width="1.3"/></svg>
<svg style="position:absolute;left:904px;top:220.5px;" width="8" height="5" viewBox="0 0 8 5"><path d="M0 0.5h7.5L3.75 4.3z" fill="#444746"/></svg>
<svg style="position:absolute;left:922px;top:216px;" width="12" height="13" viewBox="0 0 12 13"><path d="M1.5 9L5 1l3.5 8M2.8 6.2h4.4" stroke="#444746" fill="none" stroke-width="1.4" stroke-width="1.3"/><path d="M0.5 11.5h10.5M9.3 9.8l1.8 1.7-1.8 1.7" stroke="#444746" fill="none" stroke-width="1.4" stroke-width="1.2"/></svg>
<svg style="position:absolute;left:938.5px;top:220.5px;" width="8" height="5" viewBox="0 0 8 5"><path d="M0 0.5h7.5L3.75 4.3z" fill="#444746"/></svg>
<svg style="position:absolute;left:962px;top:219px;" width="15" height="8" viewBox="0 0 15 8"><path d="M5.5 1H4a3 3 0 0 0 0 6h1.5M9.5 1H11a3 3 0 0 1 0 6H9.5M4.5 4h6" stroke="#444746" fill="none" stroke-width="1.4" stroke-width="1.5"/></svg>
<svg style="position:absolute;left:990px;top:215px;" width="14" height="14" viewBox="0 0 14 14"><path d="M1 1h12v9H3.5L1 13z" stroke="#444746" fill="none" stroke-width="1.4" stroke-linejoin="round"/><path d="M7 3v5M4.5 5.5h5" stroke="#444746" fill="none" stroke-width="1.4"/></svg>
<svg style="position:absolute;left:1016px;top:216px;" width="14" height="13" viewBox="0 0 14 13"><rect x="1" y="1" width="12" height="11" rx="1" stroke="#444746" fill="none" stroke-width="1.4"/><path d="M4.5 5.5v4M7 7v2.5M9.5 8.5v1" stroke="#444746" fill="none" stroke-width="1.4" stroke-width="1.2"/></svg>
<svg style="position:absolute;left:1044px;top:217px;" width="12" height="11" viewBox="0 0 12 11"><path d="M0.8 0.8h10.4L7 5.5v5H5v-5z" stroke="#444746" fill="none" stroke-width="1.4" stroke-linejoin="round"/></svg>
<svg style="position:absolute;left:1067px;top:215px;" width="15" height="14" viewBox="0 0 15 14"><path d="M1 10V1h9" stroke="#444746" fill="none" stroke-width="1.4"/><rect x="3.5" y="3.5" width="10.5" height="10" rx="1" stroke="#444746" fill="none" stroke-width="1.4"/><path d="M3.5 6.8h10.5" stroke="#444746" fill="none" stroke-width="1.4"/><path d="M5.5 9h1.5M8 9h1.5M10.5 9H12M5.5 11.5h1.5M8 11.5h1.5M10.5 11.5H12" stroke="#444746" stroke-width="1.2"/></svg>
<svg style="position:absolute;left:1086.5px;top:220.5px;" width="8" height="5" viewBox="0 0 8 5"><path d="M0 0.5h7.5L3.75 4.3z" fill="#444746"/></svg>
<svg style="position:absolute;left:1108px;top:217px;" width="9" height="11" viewBox="0 0 9 11"><path d="M8.3 1.5V0.8H0.8L4.8 5.5 0.8 10.2h7.5V9.5" stroke="#444746" fill="none" stroke-width="1.4" stroke-width="1.5"/></svg>
<div class="t" style="left:1139px;top:213px;width:16px;height:20px;color:#1f1f1f;font:bold 15.5px/20px 'Liberation Sans';text-align:center">ê</div>
<svg style="position:absolute;left:1161px;top:220.5px;" width="8" height="5" viewBox="0 0 8 5"><path d="M0 0.5h7.5L3.75 4.3z" fill="#444746"/></svg>
<svg style="position:absolute;left:1830px;top:219px;" width="12" height="8" viewBox="0 0 12 8"><path d="M1 6.5L6 1.5l5 5" stroke="#444746" fill="none" stroke-width="1.4" stroke-width="1.6"/></svg>
<div style="position:absolute;left:0px;top:245px;width:1873px;height:25px;background:#fff"></div>
<div class="t" style="left:12px;top:247px;width:30px;height:20px;color:#1f1f1f;font:11.5px/20px 'Liberation Sans'">L6</div>
<svg style="position:absolute;left:71px;top:255px;" width="8" height="4" viewBox="0 0 8 4"><path d="M0 0h8L4 4z" fill="#444746"/></svg>
<div class="t" style="left:97px;top:246px;width:16px;height:22px;color:#9aa0a6;font:italic 13px/22px 'Liberation Serif'"><i>fx</i></div>
<div class="t" style="left:118px;top:247px;width:40px;height:20px;color:#1f1f1f;font:11.5px/20px 'Liberation Sans'">0,46</div>
<svg style="position:absolute;left:1888px;top:215px;" width="16" height="16" viewBox="0 0 16 16"><rect x="1" y="1" width="14" height="14" rx="1.5" fill="#fff"/><path d="M1 12h14v1.5A1.5 1.5 0 0 1 13.5 15h-12A1.5 1.5 0 0 1 0 13.5z" fill="#34a853"/><path d="M12 1h1.5A1.5 1.5 0 0 1 15 2.5V12h-3z" fill="#fbbc04"/><path d="M1 2.5A1.5 1.5 0 0 1 2.5 1H12v3H1zM1 4h3v8H1z" fill="#4285f4"/><text x="8" y="11" font-size="6.5" font-family="Liberation Sans" fill="#4285f4" text-anchor="middle" font-weight="bold">31</text></svg>
<svg style="position:absolute;left:1888px;top:262px;" width="16" height="17" viewBox="0 0 16 17"><rect x="0" y="0" width="16" height="17" rx="2" fill="#fbbc04"/><circle cx="8" cy="7.5" r="3.3" fill="#fff"/><rect x="6.5" y="11" width="3" height="2" fill="#fff"/></svg>
<svg style="position:absolute;left:1887px;top:308px;" width="18" height="18" viewBox="0 0 18 18"><circle cx="9" cy="9.5" r="6.5" stroke="#1a73e8" stroke-width="2.6" fill="none"/><path d="M5.8 9.5l2.4 2.3L15 4" stroke="#1a73e8" stroke-width="2.4" fill="none"/></svg>
<svg style="position:absolute;left:1888px;top:355px;" width="16" height="16" viewBox="0 0 16 16"><circle cx="8" cy="4" r="3" fill="#1a73e8"/><path d="M2 15c0-4 2.5-6 6-6s6 2 6 6z" fill="#1a73e8"/></svg>
<svg style="position:absolute;left:1889px;top:401px;" width="14" height="19" viewBox="0 0 14 19"><path d="M7 19C3.5 14 1 11 1 7a6 6 0 0 1 12 0c0 4-2.5 7-6 12z" fill="#34a853"/><path d="M1 7a6 6 0 0 1 10.5-4L7 7.5z" fill="#4285f4"/><path d="M11.5 3A6 6 0 0 1 13 7c0 1-.2 2-.6 3L7 7.5z" fill="#ea4335"/><path d="M1.3 9L7 7.5 3 13z" fill="#fbbc04"/><circle cx="7" cy="7" r="2.2" fill="#fff"/></svg>
<div style="position:absolute;left:1888px;top:447px;width:17px;height:1px;background:#dadce0"></div>
<svg style="position:absolute;left:1888px;top:477px;" width="16" height="16" viewBox="0 0 16 16"><path d="M8 1v14M1 8h14" stroke="#1f1f1f" stroke-width="1.6"/></svg>
<svg style="position:absolute;left:1892px;top:991px;" width="9" height="11" viewBox="0 0 9 11"><path d="M2 1.5l4 4-4 4" stroke="#444746" stroke-width="1.4" fill="none"/></svg>
<div style="position:absolute;left:0px;top:270px;width:1873px;height:708px;background:#fff"></div>
<div style="position:absolute;left:710px;top:290px;width:1px;height:158px;background:#e1e1e1"></div>
<div style="position:absolute;left:776px;top:290px;width:1px;height:158px;background:#e1e1e1"></div>
<div style="position:absolute;left:842px;top:290px;width:1px;height:158px;background:#e1e1e1"></div>
<div style="position:absolute;left:908px;top:290px;width:1px;height:158px;background:#e1e1e1"></div>
<div style="position:absolute;left:974px;top:290px;width:1px;height:158px;background:#e1e1e1"></div>
<div style="position:absolute;left:1040px;top:290px;width:1px;height:158px;background:#e1e1e1"></div>
<div style="position:absolute;left:1106px;top:290px;width:1px;height:158px;background:#e1e1e1"></div>
<div style="position:absolute;left:1172px;top:290px;width:1px;height:158px;background:#e1e1e1"></div>
<div style="position:absolute;left:1238px;top:290px;width:1px;height:158px;background:#e1e1e1"></div>
<div style="position:absolute;left:1304px;top:290px;width:1px;height:158px;background:#e1e1e1"></div>
<div style="position:absolute;left:1370px;top:290px;width:1px;height:158px;background:#e1e1e1"></div>
<div style="position:absolute;left:710px;top:906px;width:1px;height:72px;background:#e1e1e1"></div>
<div style="position:absolute;left:776px;top:906px;width:1px;height:72px;background:#e1e1e1"></div>
<div style="position:absolute;left:842px;top:906px;width:1px;height:72px;background:#e1e1e1"></div>
<div style="position:absolute;left:908px;top:906px;width:1px;height:72px;background:#e1e1e1"></div>
<div style="position:absolute;left:974px;top:906px;width:1px;height:72px;background:#e1e1e1"></div>
<div style="position:absolute;left:1040px;top:906px;width:1px;height:72px;background:#e1e1e1"></div>
<div style="position:absolute;left:1106px;top:906px;width:1px;height:72px;background:#e1e1e1"></div>
<div style="position:absolute;left:1172px;top:906px;width:1px;height:72px;background:#e1e1e1"></div>
<div style="position:absolute;left:1238px;top:906px;width:1px;height:72px;background:#e1e1e1"></div>
<div style="position:absolute;left:1304px;top:906px;width:1px;height:72px;background:#e1e1e1"></div>
<div style="position:absolute;left:1370px;top:906px;width:1px;height:72px;background:#e1e1e1"></div>
<div style="position:absolute;left:1436px;top:906px;width:1px;height:72px;background:#e1e1e1"></div>
<div style="position:absolute;left:1565px;top:906px;width:1px;height:72px;background:#e1e1e1"></div>
<div style="position:absolute;left:1610px;top:906px;width:1px;height:72px;background:#e1e1e1"></div>
<div style="position:absolute;left:1764px;top:906px;width:1px;height:72px;background:#e1e1e1"></div>
<div style="position:absolute;left:1859px;top:906px;width:1px;height:72px;background:#e1e1e1"></div>
<div style="position:absolute;left:710px;top:326px;width:726px;height:1px;background:#e1e1e1"></div>
<div style="position:absolute;left:37px;top:349px;width:1399px;height:1px;background:#e1e1e1"></div>
<div style="position:absolute;left:710px;top:943px;width:1150px;height:1px;background:#e1e1e1"></div>
<div style="position:absolute;left:37px;top:290px;width:674px;height:37px;background:#1155cc"></div>
<div class="t" style="left:40px;top:290px;width:670px;height:36px;color:#fff;font:bold 15.7px/37px 'Liberation Serif';"><b>ĐÁNH GIÁ HIỆU QUẢ <span style="color:#ff0">THAM GIA DỰ ÁN...............................................</span></b></div>
<div style="position:absolute;left:1610px;top:290px;width:249px;height:36px;background:#ff0"></div>
<div class="t" style="left:1610px;top:290px;width:249px;height:36px;color:#1155cc;font:bold 11px/36px 'Liberation Serif';text-align:center"><u>QT ĐÁNH GIÁ HQCV, VĂN HÓA</u></div>
<div class="t" style="left:40px;top:327px;width:660px;height:22px;font:12.25px/22px 'Liberation Serif';">Hàng tháng chủ trì NÊN có kế hoạch làm việc cụ thể cho thành viên tham gia dự án để theo dõi và đánh giá sự đóng góp</div>
<div class="t" style="left:40px;top:353px;width:660px;height:96px;font:11.2px/13.35px 'Liberation Serif';white-space:nowrap">Cuối háng chủ trì đánh giá Hiệu quả dự án như sau:<br>B1: Ngày 25 hàng tháng chủ trì đánh giá hiệu quả của thành viên Dự án theo Kế hoạch làm việc<br>B2: Chủ trì sắp xếp lịch ngồi review 1:1 với nhân sự để đánh giá kết quả đóng góp và công bố số điểm<br>B3: In, ký biểu mẫu đánh giá và gửi về P. HCNS trước 30 hàng tháng<br>&nbsp;<br>Điểm tối đa cho mỗi Dự án tại Danh sách phía dưới biểu mẫu này<br>Ví dụ: Dự án Công Nghệ có 5 thành viên, Chủ trì có tổng 2,14 điểm để đánh giá 5 thành viên này.</div>
<div style="position:absolute;left:37px;top:448px;width:1528px;height:76px;background:#26a69a"></div>
<div style="position:absolute;left:37px;top:558px;width:548px;height:22px;background:#ddf0ee"></div>
<div style="position:absolute;left:37px;top:614px;width:548px;height:22px;background:#ddf0ee"></div>
<div style="position:absolute;left:37px;top:660px;width:548px;height:22px;background:#ddf0ee"></div>
<div style="position:absolute;left:37px;top:706px;width:548px;height:22px;background:#ddf0ee"></div>
<div style="position:absolute;left:37px;top:768px;width:548px;height:22px;background:#ddf0ee"></div>
<div style="position:absolute;left:37px;top:448px;width:1529px;height:1px;background:#000"></div>
<div style="position:absolute;left:37px;top:524px;width:1529px;height:1px;background:#000"></div>
<div style="position:absolute;left:37px;top:557px;width:1529px;height:1px;background:#000"></div>
<div style="position:absolute;left:37px;top:580px;width:1529px;height:1px;background:#000"></div>
<div style="position:absolute;left:37px;top:613px;width:1529px;height:1px;background:#000"></div>
<div style="position:absolute;left:37px;top:636px;width:1529px;height:1px;background:#000"></div>
<div style="position:absolute;left:37px;top:659px;width:1529px;height:1px;background:#000"></div>
<div style="position:absolute;left:37px;top:682px;width:1529px;height:1px;background:#000"></div>
<div style="position:absolute;left:37px;top:705px;width:1529px;height:1px;background:#000"></div>
<div style="position:absolute;left:37px;top:728px;width:1529px;height:1px;background:#000"></div>
<div style="position:absolute;left:37px;top:767px;width:1529px;height:1px;background:#000"></div>
<div style="position:absolute;left:37px;top:790px;width:1529px;height:1px;background:#000"></div>
<div style="position:absolute;left:37px;top:813px;width:1529px;height:1px;background:#000"></div>
<div style="position:absolute;left:37px;top:836px;width:1529px;height:1px;background:#000"></div>
<div style="position:absolute;left:37px;top:859px;width:1529px;height:1px;background:#000"></div>
<div style="position:absolute;left:37px;top:882px;width:1529px;height:1px;background:#000"></div>
<div style="position:absolute;left:585px;top:486px;width:980px;height:1px;background:#000"></div>
<div style="position:absolute;left:37px;top:448px;width:1px;height:435px;background:#000"></div>
<div style="position:absolute;left:394px;top:448px;width:1px;height:435px;background:#000"></div>
<div style="position:absolute;left:585px;top:448px;width:1px;height:435px;background:#000"></div>
<div style="position:absolute;left:1565px;top:448px;width:1px;height:435px;background:#000"></div>
<div style="position:absolute;left:203px;top:524px;width:1px;height:0px;"></div>
<div style="position:absolute;left:710px;top:486px;width:1px;height:397px;background:#000"></div>
<div style="position:absolute;left:776px;top:486px;width:1px;height:397px;background:#000"></div>
<div style="position:absolute;left:842px;top:486px;width:1px;height:397px;background:#000"></div>
<div style="position:absolute;left:908px;top:486px;width:1px;height:397px;background:#000"></div>
<div style="position:absolute;left:974px;top:486px;width:1px;height:397px;background:#000"></div>
<div style="position:absolute;left:1040px;top:486px;width:1px;height:397px;background:#000"></div>
<div style="position:absolute;left:1106px;top:486px;width:1px;height:397px;background:#000"></div>
<div style="position:absolute;left:1172px;top:486px;width:1px;height:397px;background:#000"></div>
<div style="position:absolute;left:1238px;top:486px;width:1px;height:397px;background:#000"></div>
<div style="position:absolute;left:1304px;top:486px;width:1px;height:397px;background:#000"></div>
<div style="position:absolute;left:1370px;top:486px;width:1px;height:397px;background:#000"></div>
<div style="position:absolute;left:1436px;top:486px;width:1px;height:397px;background:#000"></div>
<div style="position:absolute;left:1436px;top:448px;width:1px;height:434px;background:#000"></div>
<div class="t" style="left:37px;top:448px;width:357px;height:76px;color:#ff0;font:bold 12.35px/15px 'Liberation Serif';text-align:center;display:flex;align-items:center;justify-content:center;">KẾT QUẢ THÀNH VIÊN ĐÓNG GÓP</div>
<div class="t" style="left:394px;top:448px;width:191px;height:76px;color:#ff0;font:bold 12.35px/15px 'Liberation Serif';text-align:center;display:flex;align-items:center;justify-content:center;">THÀNH VIÊN THAM GIA</div>
<div class="t" style="left:585px;top:448px;width:851px;height:38px;color:#ff0;font:bold 12.35px/15px 'Liberation Serif';text-align:center;display:flex;align-items:center;justify-content:center;">ĐIỂM HIỆU QUẢ</div>
<div class="t" style="left:1436px;top:448px;width:129px;height:38px;color:#ff0;font:bold 12.35px/15px 'Liberation Serif';text-align:center;display:flex;align-items:center;justify-content:center;line-height:14px">XÁC NHẬN CỦA<br>THÀNH VIÊN</div>
<div class="t" style="left:1436px;top:486px;width:129px;height:38px;color:#ff0;font:bold 12.35px/15px 'Liberation Serif';text-align:center;display:flex;align-items:center;justify-content:center;">TỔNG</div>
<div class="t" style="left:585px;top:486px;width:125px;height:38px;color:#ff0;font:bold 12.35px/15px 'Liberation Serif';text-align:center;display:flex;align-items:center;justify-content:center;white-space:nowrap;overflow:hidden">Ngân</div>
<div class="t" style="left:710px;top:486px;width:66px;height:38px;color:#ff0;font:bold 12.35px/15px 'Liberation Serif';text-align:center;display:flex;align-items:center;justify-content:center;white-space:nowrap;overflow:hidden">Hương</div>
<div class="t" style="left:776px;top:486px;width:66px;height:38px;color:#ff0;font:bold 12.35px/15px 'Liberation Serif';text-align:center;display:flex;align-items:center;justify-content:center;white-space:nowrap;overflow:hidden">Bích</div>
<div class="t" style="left:842px;top:486px;width:66px;height:38px;color:#ff0;font:bold 12.35px/15px 'Liberation Serif';text-align:center;display:flex;align-items:center;justify-content:center;white-space:nowrap;overflow:hidden">Lại Tùng</div>
<div class="t" style="left:908px;top:486px;width:66px;height:38px;color:#ff0;font:bold 12.35px/15px 'Liberation Serif';text-align:center;display:flex;align-items:center;justify-content:center;white-space:nowrap;overflow:hidden">Thanh Tùng</div>
<div class="t" style="left:974px;top:486px;width:66px;height:38px;color:#ff0;font:bold 12.35px/15px 'Liberation Serif';text-align:center;display:flex;align-items:center;justify-content:center;white-space:nowrap;overflow:hidden">Tuyến</div>
<div class="t" style="left:1040px;top:486px;width:66px;height:38px;color:#ff0;font:bold 12.35px/15px 'Liberation Serif';text-align:center;display:flex;align-items:center;justify-content:center;white-space:nowrap;overflow:hidden">Hoa</div>
<div class="t" style="left:1106px;top:486px;width:66px;height:38px;color:#ff0;font:bold 12.35px/15px 'Liberation Serif';text-align:center;display:flex;align-items:center;justify-content:center;white-space:nowrap;overflow:hidden">Hằng</div>
<div class="t" style="left:1172px;top:486px;width:66px;height:38px;color:#ff0;font:bold 12.35px/15px 'Liberation Serif';text-align:center;display:flex;align-items:center;justify-content:center;white-space:nowrap;overflow:hidden">Dịu</div>
<div class="t" style="left:1238px;top:486px;width:66px;height:38px;color:#ff0;font:bold 12.35px/15px 'Liberation Serif';text-align:center;display:flex;align-items:center;justify-content:center;white-space:nowrap;overflow:hidden">Như</div>
<div class="t" style="left:1304px;top:486px;width:66px;height:38px;color:#ff0;font:bold 12.35px/15px 'Liberation Serif';text-align:center;display:flex;align-items:center;justify-content:center;white-space:nowrap;overflow:hidden">Hà</div>
<div class="t" style="left:1370px;top:486px;width:66px;height:38px;color:#ff0;font:bold 12.35px/15px 'Liberation Serif';text-align:center;display:flex;align-items:center;justify-content:center;white-space:nowrap;overflow:hidden">Ngọc Anh</div>
<div class="t" style="left:40px;top:525px;width:352px;height:32px;display:flex;align-items:center;font:bold 11px/13px 'Liberation Serif';">Xử lý sai phạm hoá đơn, mô tả, làm việc đối tác, vẽ luồng, tài liệu mô tả</div>
<div class="t" style="left:397px;top:525px;width:186px;height:32px;display:flex;align-items:center;font:12.35px/14px 'Liberation Serif';white-space:nowrap">Nguyễn Thị Thu Hương</div>
<div class="t" style="left:585px;top:525px;width:125px;height:32px;display:flex;align-items:center;justify-content:center;font:11px/13px 'Liberation Serif';">0,34</div>
<div class="t" style="left:710px;top:525px;width:66px;height:32px;display:flex;align-items:center;justify-content:center;font:11px/13px 'Liberation Serif';">0,34</div>
<div class="t" style="left:1172px;top:525px;width:66px;height:32px;display:flex;align-items:center;justify-content:center;font:11px/13px 'Liberation Serif';">0,46</div>
<div class="t" style="left:1436px;top:525px;width:129px;height:32px;display:flex;align-items:center;justify-content:center;font:bold 11px/13px 'Liberation Serif';">0,38</div>
<div class="t" style="left:40px;top:558px;width:352px;height:22px;display:flex;align-items:center;font:bold 11px/13px 'Liberation Serif';">Xử lý ticket</div>
<div class="t" style="left:397px;top:558px;width:186px;height:22px;display:flex;align-items:center;font:12.35px/14px 'Liberation Serif';white-space:nowrap">Nguyễn Thị Ngọc Hoa</div>
<div class="t" style="left:585px;top:558px;width:125px;height:22px;display:flex;align-items:center;justify-content:center;font:11px/13px 'Liberation Serif';">0,16</div>
<div class="t" style="left:710px;top:558px;width:66px;height:22px;display:flex;align-items:center;justify-content:center;font:11px/13px 'Liberation Serif';">0,16</div>
<div class="t" style="left:1172px;top:558px;width:66px;height:22px;display:flex;align-items:center;justify-content:center;font:11px/13px 'Liberation Serif';">0,16</div>
<div class="t" style="left:1436px;top:558px;width:129px;height:22px;display:flex;align-items:center;justify-content:center;font:bold 11px/13px 'Liberation Serif';">0,16</div>
<div class="t" style="left:40px;top:581px;width:352px;height:32px;display:flex;align-items:center;font:bold 11px/13px 'Liberation Serif';">Chủ trì điều phối</div>
<div class="t" style="left:397px;top:581px;width:186px;height:32px;display:flex;align-items:center;font:12.35px/14px 'Liberation Serif';white-space:nowrap">Trần Thị Ngân</div>
<div class="t" style="left:585px;top:581px;width:125px;height:32px;display:flex;align-items:center;justify-content:center;font:11px/13px 'Liberation Serif';">0,42</div>
<div class="t" style="left:710px;top:581px;width:66px;height:32px;display:flex;align-items:center;justify-content:center;font:11px/13px 'Liberation Serif';">0,42</div>
<div class="t" style="left:1172px;top:581px;width:66px;height:32px;display:flex;align-items:center;justify-content:center;font:11px/13px 'Liberation Serif';">0,42</div>
<div class="t" style="left:1436px;top:581px;width:129px;height:32px;display:flex;align-items:center;justify-content:center;font:bold 11px/13px 'Liberation Serif';">0,42</div>
<div class="t" style="left:40px;top:614px;width:352px;height:22px;display:flex;align-items:center;font:bold 11px/13px 'Liberation Serif';">Xử lý ticket</div>
<div class="t" style="left:397px;top:614px;width:186px;height:22px;display:flex;align-items:center;font:12.35px/14px 'Liberation Serif';white-space:nowrap">Lại Thanh Tùng</div>
<div class="t" style="left:585px;top:614px;width:125px;height:22px;display:flex;align-items:center;justify-content:center;font:11px/13px 'Liberation Serif';">0,10</div>
<div class="t" style="left:710px;top:614px;width:66px;height:22px;display:flex;align-items:center;justify-content:center;font:11px/13px 'Liberation Serif';">0,10</div>
<div class="t" style="left:1172px;top:614px;width:66px;height:22px;display:flex;align-items:center;justify-content:center;font:11px/13px 'Liberation Serif';">0,10</div>
<div class="t" style="left:1436px;top:614px;width:129px;height:22px;display:flex;align-items:center;justify-content:center;font:bold 11px/13px 'Liberation Serif';">0,10</div>
<div class="t" style="left:40px;top:637px;width:352px;height:22px;display:flex;align-items:center;font:bold 11px/13px 'Liberation Serif';">Xử lý ticket</div>
<div class="t" style="left:397px;top:637px;width:186px;height:22px;display:flex;align-items:center;font:12.35px/14px 'Liberation Serif';white-space:nowrap">Nguyễn Thị Dịu</div>
<div class="t" style="left:585px;top:637px;width:125px;height:22px;display:flex;align-items:center;justify-content:center;font:11px/13px 'Liberation Serif';">0,10</div>
<div class="t" style="left:710px;top:637px;width:66px;height:22px;display:flex;align-items:center;justify-content:center;font:11px/13px 'Liberation Serif';">0,10</div>
<div class="t" style="left:1172px;top:637px;width:66px;height:22px;display:flex;align-items:center;justify-content:center;font:11px/13px 'Liberation Serif';">0,10</div>
<div class="t" style="left:1436px;top:637px;width:129px;height:22px;display:flex;align-items:center;justify-content:center;font:bold 11px/13px 'Liberation Serif';">0,10</div>
<div class="t" style="left:40px;top:660px;width:352px;height:22px;display:flex;align-items:center;font:bold 11px/13px 'Liberation Serif';">Xử lý ticket</div>
<div class="t" style="left:397px;top:660px;width:186px;height:22px;display:flex;align-items:center;font:12.35px/14px 'Liberation Serif';white-space:nowrap">Thân Thanh Tùng</div>
<div class="t" style="left:585px;top:660px;width:125px;height:22px;display:flex;align-items:center;justify-content:center;font:11px/13px 'Liberation Serif';">0,10</div>
<div class="t" style="left:710px;top:660px;width:66px;height:22px;display:flex;align-items:center;justify-content:center;font:11px/13px 'Liberation Serif';">0,10</div>
<div class="t" style="left:1172px;top:660px;width:66px;height:22px;display:flex;align-items:center;justify-content:center;font:11px/13px 'Liberation Serif';">0,10</div>
<div class="t" style="left:1436px;top:660px;width:129px;height:22px;display:flex;align-items:center;justify-content:center;font:bold 11px/13px 'Liberation Serif';">0,10</div>
<div class="t" style="left:40px;top:683px;width:352px;height:22px;display:flex;align-items:center;font:bold 11px/13px 'Liberation Serif';">Xử lý ticket</div>
<div class="t" style="left:397px;top:683px;width:186px;height:22px;display:flex;align-items:center;font:12.35px/14px 'Liberation Serif';white-space:nowrap">Trần Công Tuyến</div>
<div class="t" style="left:585px;top:683px;width:125px;height:22px;display:flex;align-items:center;justify-content:center;font:11px/13px 'Liberation Serif';">0,10</div>
<div class="t" style="left:710px;top:683px;width:66px;height:22px;display:flex;align-items:center;justify-content:center;font:11px/13px 'Liberation Serif';">0,10</div>
<div class="t" style="left:1172px;top:683px;width:66px;height:22px;display:flex;align-items:center;justify-content:center;font:11px/13px 'Liberation Serif';">0,10</div>
<div class="t" style="left:1436px;top:683px;width:129px;height:22px;display:flex;align-items:center;justify-content:center;font:bold 11px/13px 'Liberation Serif';">0,10</div>
<div class="t" style="left:40px;top:706px;width:352px;height:22px;display:flex;align-items:center;font:bold 11px/13px 'Liberation Serif';">Xử lý ticket</div>
<div class="t" style="left:397px;top:706px;width:186px;height:22px;display:flex;align-items:center;font:12.35px/14px 'Liberation Serif';white-space:nowrap">Trịnh Thị Hằng</div>
<div class="t" style="left:585px;top:706px;width:125px;height:22px;display:flex;align-items:center;justify-content:center;font:11px/13px 'Liberation Serif';">0,10</div>
<div class="t" style="left:710px;top:706px;width:66px;height:22px;display:flex;align-items:center;justify-content:center;font:11px/13px 'Liberation Serif';">0,10</div>
<div class="t" style="left:1172px;top:706px;width:66px;height:22px;display:flex;align-items:center;justify-content:center;font:11px/13px 'Liberation Serif';">0,10</div>
<div class="t" style="left:1436px;top:706px;width:129px;height:22px;display:flex;align-items:center;justify-content:center;font:bold 11px/13px 'Liberation Serif';">0,10</div>
<div class="t" style="left:40px;top:729px;width:352px;height:38px;display:flex;align-items:center;font:bold 11px/13px 'Liberation Serif';padding-top:2px;box-sizing:border-box;letter-spacing:0.12px">Tham gia họp góp ý mô tả, nhiều ý tưởng + hoàn thiện công việc được<br>giao</div>
<div class="t" style="left:397px;top:729px;width:186px;height:38px;display:flex;align-items:center;font:12.35px/14px 'Liberation Serif';white-space:nowrap">Nguyễn Ngọc Anh</div>
<div class="t" style="left:585px;top:729px;width:125px;height:38px;display:flex;align-items:center;justify-content:center;font:11px/13px 'Liberation Serif';">0,18</div>
<div class="t" style="left:710px;top:729px;width:66px;height:38px;display:flex;align-items:center;justify-content:center;font:11px/13px 'Liberation Serif';">0,18</div>
<div class="t" style="left:1172px;top:729px;width:66px;height:38px;display:flex;align-items:center;justify-content:center;font:11px/13px 'Liberation Serif';">0,18</div>
<div class="t" style="left:1436px;top:729px;width:129px;height:38px;display:flex;align-items:center;justify-content:center;font:bold 11px/13px 'Liberation Serif';">0,18</div>
<div class="t" style="left:40px;top:768px;width:352px;height:22px;display:flex;align-items:center;font:bold 11px/13px 'Liberation Serif';">Xử lý ticket</div>
<div class="t" style="left:397px;top:768px;width:186px;height:22px;display:flex;align-items:center;font:12.35px/14px 'Liberation Serif';white-space:nowrap">Vũ Thị Như</div>
<div class="t" style="left:585px;top:768px;width:125px;height:22px;display:flex;align-items:center;justify-content:center;font:11px/13px 'Liberation Serif';">0,21</div>
<div class="t" style="left:710px;top:768px;width:66px;height:22px;display:flex;align-items:center;justify-content:center;font:11px/13px 'Liberation Serif';">0,21</div>
<div class="t" style="left:1172px;top:768px;width:66px;height:22px;display:flex;align-items:center;justify-content:center;font:11px/13px 'Liberation Serif';">0,21</div>
<div class="t" style="left:1436px;top:768px;width:129px;height:22px;display:flex;align-items:center;justify-content:center;font:bold 11px/13px 'Liberation Serif';">0,21</div>
<div class="t" style="left:40px;top:791px;width:352px;height:22px;display:flex;align-items:center;font:bold 11px/13px 'Liberation Serif';">Góp ý kaizen, xử lý ticket</div>
<div class="t" style="left:397px;top:791px;width:186px;height:22px;display:flex;align-items:center;font:12.35px/14px 'Liberation Serif';white-space:nowrap">Trương Thị Ngọc Bích</div>
<div class="t" style="left:585px;top:791px;width:125px;height:22px;display:flex;align-items:center;justify-content:center;font:11px/13px 'Liberation Serif';">0,33</div>
<div class="t" style="left:710px;top:791px;width:66px;height:22px;display:flex;align-items:center;justify-content:center;font:11px/13px 'Liberation Serif';">0,33</div>
<div class="t" style="left:1172px;top:791px;width:66px;height:22px;display:flex;align-items:center;justify-content:center;font:11px/13px 'Liberation Serif';">0,21</div>
<div class="t" style="left:1436px;top:791px;width:129px;height:22px;display:flex;align-items:center;justify-content:center;font:bold 11px/13px 'Liberation Serif';">0,29</div>
<div class="t" style="left:1436px;top:814px;width:129px;height:22px;display:flex;align-items:center;justify-content:center;font:bold 11px/13px 'Liberation Serif';">#DIV/0!</div>
<div style="position:absolute;left:1559px;top:814px;width:0;height:0;border-top:6px solid #e53935;border-left:6px solid transparent"></div>
<div class="t" style="left:1436px;top:837px;width:129px;height:22px;display:flex;align-items:center;justify-content:center;font:bold 11px/13px 'Liberation Serif';">#DIV/0!</div>
<div style="position:absolute;left:1559px;top:837px;width:0;height:0;border-top:6px solid #e53935;border-left:6px solid transparent"></div>
<div class="t" style="left:1436px;top:860px;width:129px;height:22px;display:flex;align-items:center;justify-content:center;font:bold 11px/13px 'Liberation Serif';">#DIV/0!</div>
<div style="position:absolute;left:1559px;top:860px;width:0;height:0;border-top:6px solid #e53935;border-left:6px solid transparent"></div>
<div class="t" style="left:394px;top:860px;width:191px;height:22px;display:flex;align-items:center;justify-content:center;font:bold 11px/13px 'Liberation Serif';">Tổng</div>
<div class="t" style="left:585px;top:860px;width:125px;height:22px;display:flex;align-items:center;justify-content:center;font:bold 11px/13px 'Liberation Serif';">2,14</div>
<div class="t" style="left:710px;top:860px;width:66px;height:22px;display:flex;align-items:center;justify-content:center;font:bold 11px/13px 'Liberation Serif';">2,14</div>
<div class="t" style="left:776px;top:860px;width:66px;height:22px;display:flex;align-items:center;justify-content:center;font:bold 11px/13px 'Liberation Serif';">0,00</div>
<div class="t" style="left:842px;top:860px;width:66px;height:22px;display:flex;align-items:center;justify-content:center;font:bold 11px/13px 'Liberation Serif';">0,00</div>
<div class="t" style="left:908px;top:860px;width:66px;height:22px;display:flex;align-items:center;justify-content:center;font:bold 11px/13px 'Liberation Serif';">0,00</div>
<div class="t" style="left:974px;top:860px;width:66px;height:22px;display:flex;align-items:center;justify-content:center;font:bold 11px/13px 'Liberation Serif';">0,00</div>
<div class="t" style="left:1040px;top:860px;width:66px;height:22px;display:flex;align-items:center;justify-content:center;font:bold 11px/13px 'Liberation Serif';">0,00</div>
<div class="t" style="left:1106px;top:860px;width:66px;height:22px;display:flex;align-items:center;justify-content:center;font:bold 11px/13px 'Liberation Serif';">0,00</div>
<div class="t" style="left:1172px;top:860px;width:66px;height:22px;display:flex;align-items:center;justify-content:center;font:bold 11px/13px 'Liberation Serif';">2,14</div>
<div class="t" style="left:1238px;top:860px;width:66px;height:22px;display:flex;align-items:center;justify-content:center;font:bold 11px/13px 'Liberation Serif';">0,00</div>
<div class="t" style="left:1304px;top:860px;width:66px;height:22px;display:flex;align-items:center;justify-content:center;font:bold 11px/13px 'Liberation Serif';">0,00</div>
<div class="t" style="left:1370px;top:860px;width:66px;height:22px;display:flex;align-items:center;justify-content:center;font:bold 11px/13px 'Liberation Serif';">0,00</div>
<div style="position:absolute;left:37px;top:905px;width:673px;height:38px;background:#26a69a"></div>
<div style="position:absolute;left:37px;top:905px;width:674px;height:1px;background:#000"></div>
<div style="position:absolute;left:37px;top:943px;width:674px;height:1px;background:#000"></div>
<div style="position:absolute;left:37px;top:905px;width:1px;height:73px;background:#000"></div>
<div style="position:absolute;left:203px;top:905px;width:1px;height:73px;background:#000"></div>
<div style="position:absolute;left:394px;top:905px;width:1px;height:73px;background:#000"></div>
<div style="position:absolute;left:585px;top:905px;width:1px;height:73px;background:#000"></div>
<div style="position:absolute;left:710px;top:905px;width:1px;height:73px;background:#000"></div>
<div class="t" style="left:37px;top:906px;width:166px;height:37px;color:#ff0;font:bold 12.2px/15px 'Liberation Serif';text-align:center;display:flex;align-items:flex-end;justify-content:center;padding-bottom:0px;box-sizing:border-box;">STT</div>
<div class="t" style="left:203px;top:906px;width:191px;height:37px;color:#ff0;font:bold 12.2px/15px 'Liberation Serif';text-align:center;display:flex;align-items:flex-end;justify-content:center;padding-bottom:0px;box-sizing:border-box;">TÊN DỰ ÁN</div>
<div class="t" style="left:394px;top:906px;width:191px;height:37px;color:#ff0;font:bold 12.2px/15px 'Liberation Serif';text-align:center;display:flex;align-items:flex-end;justify-content:center;padding-bottom:0px;box-sizing:border-box;">SỐ ĐIỂM</div>
<div class="t" style="left:585px;top:906px;width:125px;height:37px;color:#ff0;font:bold 12.2px/15px 'Liberation Serif';text-align:center;display:flex;align-items:flex-end;justify-content:center;padding-bottom:0px;box-sizing:border-box;">NGƯỜI CHỦ TRÌ</div>
<div class="t" style="left:37px;top:944px;width:166px;height:34px;font:11px/13px 'Liberation Serif';text-align:center;padding-top:25px;box-sizing:border-box">1</div>
<div class="t" style="left:206px;top:944px;width:190px;height:34px;font:11.1px/14px 'Liberation Serif';padding-top:25px;box-sizing:border-box;white-space:nowrap">Dự án Nâng cao trải nghiệm KH</div>
<div class="t" style="left:394px;top:944px;width:191px;height:34px;font:11px/13px 'Liberation Serif';text-align:center;padding-top:25px;box-sizing:border-box">2,26</div>
<div class="t" style="left:588px;top:944px;width:122px;height:34px;font:11.6px/14px 'Liberation Serif';padding-top:25px;box-sizing:border-box;white-space:nowrap">Trần Thị Ngân</div>
<div style="position:absolute;left:1172px;top:524px;width:66px;height:33px;box-sizing:border-box;border:2px solid #1a73e8;border-width:1px 1px 2px 2px"></div>
<div style="position:absolute;left:1235px;top:554px;width:7px;height:7px;background:#0b57d0;border-radius:50%;border:1px solid #fff;box-sizing:content-box;margin:-1px"></div>
<div style="position:absolute;left:0px;top:269px;width:1860px;height:1px;background:#c7c7c7"></div>
<div style="position:absolute;left:0px;top:289px;width:1860px;height:1px;background:#c7c7c7"></div>
<div style="position:absolute;left:0px;top:270px;width:34px;height:19px;background:#f8f9fa"></div>
<div style="position:absolute;left:203px;top:270px;width:1px;height:19px;background:#c7c7c7"></div>
<div style="position:absolute;left:394px;top:270px;width:1px;height:19px;background:#c7c7c7"></div>
<div style="position:absolute;left:585px;top:270px;width:1px;height:19px;background:#c7c7c7"></div>
<div style="position:absolute;left:710px;top:270px;width:1px;height:19px;background:#c7c7c7"></div>
<div style="position:absolute;left:776px;top:270px;width:1px;height:19px;background:#c7c7c7"></div>
<div style="position:absolute;left:842px;top:270px;width:1px;height:19px;background:#c7c7c7"></div>
<div style="position:absolute;left:908px;top:270px;width:1px;height:19px;background:#c7c7c7"></div>
<div style="position:absolute;left:974px;top:270px;width:1px;height:19px;background:#c7c7c7"></div>
<div style="position:absolute;left:1040px;top:270px;width:1px;height:19px;background:#c7c7c7"></div>
<div style="position:absolute;left:1106px;top:270px;width:1px;height:19px;background:#c7c7c7"></div>
<div style="position:absolute;left:1172px;top:270px;width:1px;height:19px;background:#c7c7c7"></div>
<div style="position:absolute;left:1238px;top:270px;width:1px;height:19px;background:#c7c7c7"></div>
<div style="position:absolute;left:1304px;top:270px;width:1px;height:19px;background:#c7c7c7"></div>
<div style="position:absolute;left:1370px;top:270px;width:1px;height:19px;background:#c7c7c7"></div>
<div style="position:absolute;left:1436px;top:270px;width:1px;height:19px;background:#c7c7c7"></div>
<div style="position:absolute;left:1565px;top:270px;width:1px;height:19px;background:#c7c7c7"></div>
<div style="position:absolute;left:1610px;top:270px;width:1px;height:19px;background:#c7c7c7"></div>
<div style="position:absolute;left:1764px;top:270px;width:1px;height:19px;background:#c7c7c7"></div>
<div style="position:absolute;left:1859px;top:270px;width:1px;height:19px;background:#c7c7c7"></div>
<div class="t" style="left:38px;top:270px;width:166px;height:19px;text-align:center;font:10px/20px 'Liberation Sans';color:#3a3a3a">A</div>
<div class="t" style="left:204px;top:270px;width:191px;height:19px;text-align:center;font:10px/20px 'Liberation Sans';color:#3a3a3a">B</div>
<div class="t" style="left:395px;top:270px;width:191px;height:19px;text-align:center;font:10px/20px 'Liberation Sans';color:#3a3a3a">C</div>
<div class="t" style="left:586px;top:270px;width:125px;height:19px;text-align:center;font:10px/20px 'Liberation Sans';color:#3a3a3a">D</div>
<div class="t" style="left:711px;top:270px;width:66px;height:19px;text-align:center;font:10px/20px 'Liberation Sans';color:#3a3a3a">E</div>
<div class="t" style="left:777px;top:270px;width:66px;height:19px;text-align:center;font:10px/20px 'Liberation Sans';color:#3a3a3a">F</div>
<div class="t" style="left:843px;top:270px;width:66px;height:19px;text-align:center;font:10px/20px 'Liberation Sans';color:#3a3a3a">G</div>
<div class="t" style="left:909px;top:270px;width:66px;height:19px;text-align:center;font:10px/20px 'Liberation Sans';color:#3a3a3a">H</div>
<div class="t" style="left:975px;top:270px;width:66px;height:19px;text-align:center;font:10px/20px 'Liberation Sans';color:#3a3a3a">I</div>
<div class="t" style="left:1041px;top:270px;width:66px;height:19px;text-align:center;font:10px/20px 'Liberation Sans';color:#3a3a3a">J</div>
<div class="t" style="left:1107px;top:270px;width:66px;height:19px;text-align:center;font:10px/20px 'Liberation Sans';color:#3a3a3a">K</div>
<div style="position:absolute;left:1173px;top:270px;width:65px;height:19px;background:#d3e3fd"></div>
<div class="t" style="left:1173px;top:270px;width:66px;height:19px;text-align:center;font:bold 10px/20px 'Liberation Sans';color:#041e49">L</div>
<div class="t" style="left:1239px;top:270px;width:66px;height:19px;text-align:center;font:10px/20px 'Liberation Sans';color:#3a3a3a">M</div>
<div class="t" style="left:1305px;top:270px;width:66px;height:19px;text-align:center;font:10px/20px 'Liberation Sans';color:#3a3a3a">N</div>
<div class="t" style="left:1371px;top:270px;width:66px;height:19px;text-align:center;font:10px/20px 'Liberation Sans';color:#3a3a3a">O</div>
<div class="t" style="left:1437px;top:270px;width:129px;height:19px;text-align:center;font:10px/20px 'Liberation Sans';color:#3a3a3a">P</div>
<div class="t" style="left:1566px;top:270px;width:45px;height:19px;text-align:center;font:10px/20px 'Liberation Sans';color:#3a3a3a">Q</div>
<div class="t" style="left:1611px;top:270px;width:154px;height:19px;text-align:center;font:10px/20px 'Liberation Sans';color:#3a3a3a">R</div>
<div class="t" style="left:1765px;top:270px;width:95px;height:19px;text-align:center;font:10px/20px 'Liberation Sans';color:#3a3a3a">S</div>
<div style="position:absolute;left:34px;top:270px;width:4px;height:20px;background:#c0c0c0"></div>
<div style="position:absolute;left:0px;top:286px;width:38px;height:4px;background:#c0c0c0"></div>
<div style="position:absolute;left:37px;top:290px;width:1px;height:688px;background:#c7c7c7"></div>
<div style="position:absolute;left:0px;top:326px;width:37px;height:1px;background:#c7c7c7"></div>
<div class="t" style="left:0px;top:290px;width:37px;height:36px;display:flex;align-items:center;justify-content:center;font:9.3px 'Liberation Sans';color:#3a3a3a;">1</div>
<div style="position:absolute;left:0px;top:349px;width:37px;height:1px;background:#c7c7c7"></div>
<div class="t" style="left:0px;top:327px;width:37px;height:22px;display:flex;align-items:center;justify-content:center;font:9.3px 'Liberation Sans';color:#3a3a3a;">2</div>
<div style="position:absolute;left:0px;top:448px;width:37px;height:1px;background:#c7c7c7"></div>
<div class="t" style="left:0px;top:350px;width:37px;height:98px;display:flex;align-items:center;justify-content:center;font:9.3px 'Liberation Sans';color:#3a3a3a;">3</div>
<div style="position:absolute;left:0px;top:486px;width:37px;height:1px;background:#c7c7c7"></div>
<div class="t" style="left:0px;top:449px;width:37px;height:37px;display:flex;align-items:center;justify-content:center;font:9.3px 'Liberation Sans';color:#3a3a3a;">4</div>
<div style="position:absolute;left:0px;top:524px;width:37px;height:1px;background:#c7c7c7"></div>
<div class="t" style="left:0px;top:487px;width:37px;height:37px;display:flex;align-items:center;justify-content:center;font:9.3px 'Liberation Sans';color:#3a3a3a;">5</div>
<div style="position:absolute;left:0px;top:525px;width:37px;height:32px;background:#d3e3fd"></div>
<div style="position:absolute;left:0px;top:557px;width:37px;height:1px;background:#c7c7c7"></div>
<div class="t" style="left:0px;top:525px;width:37px;height:32px;display:flex;align-items:center;justify-content:center;font:9.3px 'Liberation Sans';color:#041e49;-webkit-text-stroke:0.3px #041e49">6</div>
<div style="position:absolute;left:0px;top:580px;width:37px;height:1px;background:#c7c7c7"></div>
<div class="t" style="left:0px;top:558px;width:37px;height:22px;display:flex;align-items:center;justify-content:center;font:9.3px 'Liberation Sans';color:#3a3a3a;">7</div>
<div style="position:absolute;left:0px;top:613px;width:37px;height:1px;background:#c7c7c7"></div>
<div class="t" style="left:0px;top:581px;width:37px;height:32px;display:flex;align-items:center;justify-content:center;font:9.3px 'Liberation Sans';color:#3a3a3a;">8</div>
<div style="position:absolute;left:0px;top:636px;width:37px;height:1px;background:#c7c7c7"></div>
<div class="t" style="left:0px;top:614px;width:37px;height:22px;display:flex;align-items:center;justify-content:center;font:9.3px 'Liberation Sans';color:#3a3a3a;">9</div>
<div style="position:absolute;left:0px;top:659px;width:37px;height:1px;background:#c7c7c7"></div>
<div class="t" style="left:0px;top:637px;width:37px;height:22px;display:flex;align-items:center;justify-content:center;font:9.3px 'Liberation Sans';color:#3a3a3a;">10</div>
<div style="position:absolute;left:0px;top:682px;width:37px;height:1px;background:#c7c7c7"></div>
<div class="t" style="left:0px;top:660px;width:37px;height:22px;display:flex;align-items:center;justify-content:center;font:9.3px 'Liberation Sans';color:#3a3a3a;">11</div>
<div style="position:absolute;left:0px;top:705px;width:37px;height:1px;background:#c7c7c7"></div>
<div class="t" style="left:0px;top:683px;width:37px;height:22px;display:flex;align-items:center;justify-content:center;font:9.3px 'Liberation Sans';color:#3a3a3a;">12</div>
<div style="position:absolute;left:0px;top:728px;width:37px;height:1px;background:#c7c7c7"></div>
<div class="t" style="left:0px;top:706px;width:37px;height:22px;display:flex;align-items:center;justify-content:center;font:9.3px 'Liberation Sans';color:#3a3a3a;">13</div>
<div style="position:absolute;left:0px;top:767px;width:37px;height:1px;background:#c7c7c7"></div>
<div class="t" style="left:0px;top:729px;width:37px;height:38px;display:flex;align-items:center;justify-content:center;font:9.3px 'Liberation Sans';color:#3a3a3a;">14</div>
<div style="position:absolute;left:0px;top:790px;width:37px;height:1px;background:#c7c7c7"></div>
<div class="t" style="left:0px;top:768px;width:37px;height:22px;display:flex;align-items:center;justify-content:center;font:9.3px 'Liberation Sans';color:#3a3a3a;">15</div>
<div style="position:absolute;left:0px;top:813px;width:37px;height:1px;background:#c7c7c7"></div>
<div class="t" style="left:0px;top:791px;width:37px;height:22px;display:flex;align-items:center;justify-content:center;font:9.3px 'Liberation Sans';color:#3a3a3a;">16</div>
<div style="position:absolute;left:0px;top:836px;width:37px;height:1px;background:#c7c7c7"></div>
<div class="t" style="left:0px;top:814px;width:37px;height:22px;display:flex;align-items:center;justify-content:center;font:9.3px 'Liberation Sans';color:#3a3a3a;">17</div>
<div style="position:absolute;left:0px;top:859px;width:37px;height:1px;background:#c7c7c7"></div>
<div class="t" style="left:0px;top:837px;width:37px;height:22px;display:flex;align-items:center;justify-content:center;font:9.3px 'Liberation Sans';color:#3a3a3a;">18</div>
<div style="position:absolute;left:0px;top:882px;width:37px;height:1px;background:#c7c7c7"></div>
<div class="t" style="left:0px;top:860px;width:37px;height:22px;display:flex;align-items:center;justify-content:center;font:9.3px 'Liberation Sans';color:#3a3a3a;">19</div>
<div style="position:absolute;left:0px;top:905px;width:37px;height:1px;background:#c7c7c7"></div>
<div class="t" style="left:0px;top:883px;width:37px;height:22px;display:flex;align-items:center;justify-content:center;font:9.3px 'Liberation Sans';color:#3a3a3a;">20</div>
<div style="position:absolute;left:0px;top:943px;width:37px;height:1px;background:#c7c7c7"></div>
<div class="t" style="left:0px;top:906px;width:37px;height:37px;display:flex;align-items:center;justify-content:center;font:9.3px 'Liberation Sans';color:#3a3a3a;">21</div>
<div class="t" style="left:0px;top:944px;width:37px;height:34px;display:flex;align-items:center;justify-content:center;font:9.3px 'Liberation Sans';color:#3a3a3a;">22</div>
<div style="position:absolute;left:1860px;top:270px;width:13px;height:708px;background:#fff"></div>
<div style="position:absolute;left:1864px;top:270px;width:9px;height:19px;background:#f8f8f8"></div>
<div style="position:absolute;left:1863px;top:269px;width:1px;height:709px;background:#d9d9d9"></div>
<div style="position:absolute;left:1859px;top:269px;width:1px;height:20px;background:#c7c7c7"></div>
<div style="position:absolute;left:1859px;top:269px;width:14px;height:1px;background:#c7c7c7"></div>
<div style="position:absolute;left:1859px;top:289px;width:14px;height:1px;background:#c7c7c7"></div>
<div style="position:absolute;left:1864px;top:291px;width:8px;height:22.5px;background:#dadce0;border-radius:4px"></div>
<div style="position:absolute;left:0px;top:978px;width:1873px;height:10px;background:#fff"></div>
<div style="position:absolute;left:0px;top:978px;width:37px;height:10px;background:#f6f6f6"></div>
<div style="position:absolute;left:37px;top:978px;width:1px;height:10px;background:#e3e3e3"></div>
<div style="position:absolute;left:40px;top:978px;width:1008px;height:8px;background:#dadce0;border-radius:4px"></div>
<div style="position:absolute;left:1864px;top:951px;width:9px;height:27px;background:#fff"></div>
<div style="position:absolute;left:1863px;top:951px;width:10px;height:1px;background:#e3e3e3"></div>
<div style="position:absolute;left:1863px;top:964px;width:10px;height:1px;background:#e3e3e3"></div>
<div style="position:absolute;left:1863px;top:978px;width:10px;height:1px;background:#e3e3e3"></div>
<svg style="position:absolute;left:1865px;top:955px;" width="7" height="5" viewBox="0 0 7 5"><path d="M0.5 4.5h6L3.5 0.8z" fill="#8f8f8f"/></svg>
<svg style="position:absolute;left:1865px;top:969px;" width="7" height="5" viewBox="0 0 7 5"><path d="M0.5 0.5h6L3.5 4.2z" fill="#8f8f8f"/></svg>
<div style="position:absolute;left:1838px;top:978px;width:1px;height:10px;background:#e3e3e3"></div>
<div style="position:absolute;left:1851px;top:978px;width:1px;height:10px;background:#e3e3e3"></div>
<svg style="position:absolute;left:1842px;top:980px;" width="5" height="7" viewBox="0 0 5 7"><path d="M4.5 0.5v6L0.8 3.5z" fill="#8f8f8f"/></svg>
<svg style="position:absolute;left:1856px;top:980px;" width="5" height="7" viewBox="0 0 5 7"><path d="M0.5 0.5v6L4.2 3.5z" fill="#8f8f8f"/></svg>
<div style="position:absolute;left:0px;top:988px;width:1873px;height:32px;background:#f9fbfd"></div>
<div style="position:absolute;left:0px;top:988px;width:1873px;height:1px;background:#e1e3e1"></div>
<svg style="position:absolute;left:44px;top:996px;" width="16" height="16" viewBox="0 0 16 16"><path d="M8 2.5v11M2.5 8h11" stroke="#444746" stroke-width="1.6"/></svg>
<svg style="position:absolute;left:77px;top:997px;" width="16" height="14" viewBox="0 0 16 14"><path d="M2 3h12M2 7h12M2 11h12" stroke="#444746" stroke-width="1.7"/></svg>
<div class="t" style="left:123px;top:993px;width:60px;height:22px;color:#444746;font:12.6px/22px 'Liberation Sans';-webkit-text-stroke:0.3px #444746">Chấm T6</div>
<svg style="position:absolute;left:181px;top:1003px;" width="9" height="5" viewBox="0 0 9 5"><path d="M0 0h9L4.5 4.5z" fill="#444746"/></svg>
<div style="position:absolute;left:200px;top:989px;width:166px;height:29px;background:#e1e9f7"></div>
<div class="t" style="left:211px;top:993px;width:140px;height:22px;color:#0b57d0;font:bold 12px/22px 'Liberation Sans'">Chấm T7 CÔNG NGHỆ</div>
<svg style="position:absolute;left:348px;top:1003px;" width="9" height="5" viewBox="0 0 9 5"><path d="M0 0h9L4.5 4.5z" fill="#0b57d0"/></svg>
<div class="t" style="left:377px;top:993px;width:110px;height:22px;color:#444746;font:12px/22px 'Liberation Sans';-webkit-text-stroke:0.3px #444746">T7 TRẢI NGHIỆM</div>
<svg style="position:absolute;left:480px;top:1003px;" width="9" height="5" viewBox="0 0 9 5"><path d="M0 0h9L4.5 4.5z" fill="#444746"/></svg>
<div style="position:absolute;left:0px;top:1020px;width:1920px;height:60px;background:linear-gradient(90deg,#dde9f6,#e2ebf6 50%,#dce8f5)"></div>
<div style="position:absolute;left:0px;top:1020px;width:1920px;height:1px;background:#c9ced6"></div>
<svg style="position:absolute;left:24px;top:1040px;" width="34" height="26" viewBox="0 0 34 26"><defs><linearGradient id="cl" x1="0" y1="0" x2="0" y2="1"><stop offset="0" stop-color="#cfe0f7"/><stop offset="1" stop-color="#8fb1e0"/></linearGradient></defs><circle cx="22" cy="7" r="6" fill="#f5a623"/><path d="M6 23a5 5 0 0 1 1-10 7 7 0 0 1 13-3 6 6 0 0 1 8 6 4 4 0 0 1 1 7z" fill="url(#cl)"/></svg>
<div style="position:absolute;left:38px;top:1027px;width:21px;height:21px;background:#c42b1c;border-radius:50%"></div>
<div class="t" style="left:38px;top:1027px;width:21px;height:21px;color:#fff;font:13.5px/21px 'Liberation Sans';text-align:center">6</div>
<div class="t" style="left:64px;top:1031px;width:60px;height:18px;color:#1a1a1a;font:14px/18px 'Liberation Sans'">36°C</div>
<div class="t" style="left:64px;top:1050px;width:90px;height:20px;color:#3d3d3d;font:14.6px/20px 'Liberation Sans'">Nhiều mây</div>
<svg style="position:absolute;left:530px;top:1036px;" width="29" height="29" viewBox="0 0 29 29"><defs><linearGradient id="wg" x1="0" y1="0" x2="1" y2="1"><stop offset="0" stop-color="#2fb5f4"/><stop offset="1" stop-color="#0a6fd6"/></linearGradient></defs><rect x="0" y="0" width="13.8" height="13.8" fill="url(#wg)"/><rect x="15.2" y="0" width="13.8" height="13.8" fill="url(#wg)"/><rect x="0" y="15.2" width="13.8" height="13.8" fill="url(#wg)"/><rect x="15.2" y="15.2" width="13.8" height="13.8" fill="url(#wg)"/></svg>
<div style="position:absolute;left:577px;top:1031px;width:273px;height:38px;background:#f7f9fc;border:1px solid #d5dbe3;border-radius:19px;box-sizing:border-box"></div>
<svg style="position:absolute;left:589px;top:1039px;" width="22" height="22" viewBox="0 0 22 22"><circle cx="9" cy="9" r="6.5" stroke="#1a1a1a" stroke-width="2" fill="none"/><path d="M13.8 13.8L19 19" stroke="#1a1a1a" stroke-width="2.2"/></svg>
<div class="t" style="left:622px;top:1038px;width:80px;height:28px;color:#5f6368;font:17px/28px 'Liberation Sans'">Search</div>
<svg style="position:absolute;left:782px;top:1031px;" width="68" height="38" viewBox="0 0 68 38"><path d="M2 28c8-3 30-4 50-2 6 .6 10 1.5 12 3-2 5-8 8-16 8H14C8 37 3 34 2 28z" fill="#4bb3bd"/><path d="M0 26c10-3 34-4 52-2 6 .7 10 1.7 12 3l-1 2c-14-2-38-1-60 0z" fill="#d9a95c"/><g><path d="M6 25l2-10 5-3 4 3v10z" fill="#c8834e"/><rect x="9" y="17" width="6" height="7" fill="#e6c08a"/><path d="M15 25V13l5-5 5 5v12z" fill="#b2653a"/><rect x="17" y="14" width="6" height="9" fill="#3d7f76"/><path d="M25 25V11l6-2 5 3v13z" fill="#e7d7b5"/><path d="M35 25V9l8-3 7 3v16z" fill="#7fa6d3"/><rect x="38" y="11" width="9" height="12" fill="#2d4f8f"/><path d="M50 25V13l8-2 6 3v11z" fill="#d8cdbd"/></g><path d="M20 11c4-6 10-8 16-6" stroke="#5b9b6c" stroke-width="3" fill="none"/><circle cx="52" cy="6" r="5" fill="#3f8f3c"/><rect x="51" y="9" width="1.5" height="8" fill="#6b4a2c"/></svg>
<svg style="position:absolute;left:865px;top:1035px;" width="31" height="31" viewBox="0 0 31 31"><defs><linearGradient id="eg1" x1="0" y1="0.2" x2="0.6" y2="1"><stop offset="0" stop-color="#2aa3ea"/><stop offset="1" stop-color="#0d5fb0"/></linearGradient><linearGradient id="eg2" x1="0" y1="0" x2="1" y2="0.5"><stop offset="0" stop-color="#2bb6e8"/><stop offset="1" stop-color="#5bd86a"/></linearGradient></defs><circle cx="15.5" cy="15.5" r="14" fill="url(#eg1)"/><path d="M2 12A14 14 0 0 1 29.5 15.5c0 3.5-2 6.5-6.5 6.5-2.5 0-4-1-4-2.5a6 6 0 0 0-12-4A10 10 0 0 0 2 12z" fill="url(#eg2)"/><path d="M9 19c0-3.5 2.7-6 6-6 2.5 0 3.8 1.3 3.8 3 0 1-.5 1.5-.5 2.5 0 2.7 3 4.5 6.5 4.5 1.5 0 2.8-.3 3.7-.8A14 14 0 0 1 15 29.5c-3.5 0-6-4.5-6-10.5z" fill="#0b4f98" opacity="0.6"/></svg>
<svg style="position:absolute;left:920px;top:1035px;" width="31" height="30" viewBox="0 0 31 30"><defs><linearGradient id="cg1" x1="0" y1="0" x2="0.4" y2="1"><stop offset="0" stop-color="#1a9df0"/><stop offset="0.45" stop-color="#3dd38a"/><stop offset="0.75" stop-color="#f5d23a"/><stop offset="1" stop-color="#f26b3a"/></linearGradient><linearGradient id="cg2" x1="0.5" y1="0" x2="0.6" y2="1"><stop offset="0" stop-color="#2a5bea"/><stop offset="0.4" stop-color="#b45be8"/><stop offset="1" stop-color="#f57aa0"/></linearGradient></defs><path d="M10 1.5h7c2 0 2.8 1.3 3.2 2.8L14 23c-.6 2-2 4.5-5 4.5H5.5c-2.5 0-3.7-2-3-4.5L8 5c.5-2 1-3.5 2-3.5z" fill="url(#cg1)"/><path d="M14.5 27.5h7c2.5 0 3.5-1.5 4-3.5L30 9c.7-2.5-.5-4.5-3-4.5h-3.5c-3 0-4.3 2.5-5 4.5L12.5 24c-.5 2 .2 3.5 2 3.5z" fill="url(#cg2)"/></svg>
<svg style="position:absolute;left:975px;top:1036px;" width="31" height="28" viewBox="0 0 31 28"><path d="M1 3a2 2 0 0 1 2-2h9l3 3h13a2 2 0 0 1 2 2v4H1z" fill="#e8a500"/><path d="M1 8h29v18a2 2 0 0 1-2 2H3a2 2 0 0 1-2-2z" fill="#ffcb3d"/><rect x="9" y="18" width="13" height="3" rx="1" fill="#1e6fd9"/></svg>
<svg style="position:absolute;left:1030px;top:1034px;" width="31" height="32" viewBox="0 0 31 32"><path d="M8 3h15a7 7 0 0 1 7 7v12a7 7 0 0 1-7 7H12l-6 2.5 1.5-3.5A8 8 0 0 1 2 21V10a7 7 0 0 1 6-7z" fill="#fff" stroke="#0a68fe" stroke-width="2.2"/><path d="M2.5 11v10a8 8 0 0 0 5 7" stroke="#0a68fe" stroke-width="3.5" fill="none"/><text x="16" y="20" font-size="9.5" font-family="Liberation Sans" font-weight="bold" fill="#0a68fe" text-anchor="middle">Zalo</text></svg>
<div style="position:absolute;left:1047px;top:1027px;width:21px;height:21px;background:#e81123;border-radius:50%;border:1.5px solid #fff;box-sizing:border-box"></div>
<div class="t" style="left:1047px;top:1027px;width:21px;height:21px;color:#fff;font:bold 10px/21px 'Liberation Sans';text-align:center">5+</div>
<svg style="position:absolute;left:1085px;top:1036px;" width="31" height="29" viewBox="0 0 31 29"><circle cx="24" cy="7" r="4" fill="#7b83eb"/><path d="M18 12h11v9a5 5 0 0 1-10 0z" fill="#7b83eb"/><circle cx="15" cy="5.5" r="4.5" fill="#5059c9"/><path d="M8 11h15v11a7 7 0 0 1-14 0z" fill="#5059c9"/><rect x="1" y="9" width="14" height="14" rx="2" fill="#4b53bc"/><path d="M4.5 12.5h7M8 12.5v8" stroke="#fff" stroke-width="2"/></svg>
<div style="position:absolute;left:1133px;top:1026px;width:46px;height:48px;background:rgba(255,255,255,0.55);border-radius:5px"></div>
<svg style="position:absolute;left:1140px;top:1036px;" width="30" height="30" viewBox="0 0 30 30"><circle cx="15" cy="15" r="14" fill="#db4437"/><path d="M15 15L2.9 22A14 14 0 0 0 15 29l7-12z" fill="#0f9d58"/><path d="M15 15l12.1-7A14 14 0 0 1 15 29l7-12z" fill="#ffcd40"/><path d="M27.1 8H15v7z" fill="#ffcd40"/><circle cx="15" cy="15" r="6.5" fill="#fff"/><circle cx="15" cy="15" r="5" fill="#1a73e8"/></svg>
<svg style="position:absolute;left:1156px;top:1027px;" width="20" height="20" viewBox="0 0 25 25"><defs><clipPath id="av3"><circle cx="12.5" cy="12.5" r="12.5"/></clipPath></defs><g clip-path="url(#av3)"><rect width="25" height="25" fill="#d9d9d9"/><rect x="0" y="0" width="8" height="9" fill="#9a9a9a"/><rect x="16" y="3" width="9" height="6" fill="#f0f0f0"/><rect x="17" y="5" width="5" height="2" fill="#d66"/><rect x="0" y="11" width="25" height="1.6" fill="#333"/><rect x="0" y="13" width="9" height="3" fill="#f2f2f2"/><rect x="17" y="14" width="8" height="2.5" fill="#f5f5f5"/><rect x="0" y="17" width="25" height="1.5" fill="#222"/><path d="M8 6c1-3 4-4 6.5-3.5 2.5.5 3.5 3 3.5 5.5l.5 9H9z" fill="#1b1613"/><ellipse cx="14" cy="10.5" rx="3" ry="3.8" fill="#a98068"/><path d="M3 25c0-5 3-8.5 8-8.5h5c5 0 7 3.5 7 8.5z" fill="#0e0e0e"/><rect x="10" y="20.5" width="7" height="2.4" fill="#d2d2d2"/></g><circle cx="10" cy="10" r="9.5" fill="none" stroke="#fff" stroke-width="1.2"/></svg>
<div style="position:absolute;left:1146px;top:1070px;width:20px;height:3px;background:#0078d4;border-radius:2px"></div>
<svg style="position:absolute;left:1194px;top:1037px;" width="32" height="27" viewBox="0 0 32 27"><path d="M1.5 8C8 15 18 17 31 7.5v3C26 22 13 27 1.5 23z" fill="#3a7bf0"/><path d="M14 17L31 7.5 29 15C24 21 18 21 14 17z" fill="#1f3f9e"/><path d="M6 1h15.5l4.5 9.5L16.5 15z" fill="#22ccb2"/></svg>
<svg style="position:absolute;left:1250px;top:1036px;" width="30" height="30" viewBox="0 0 30 30"><circle cx="15" cy="15" r="14" fill="#db4437"/><path d="M15 15L2.9 22A14 14 0 0 0 15 29l7-12z" fill="#0f9d58"/><path d="M15 15l12.1-7A14 14 0 0 1 15 29l7-12z" fill="#ffcd40"/><path d="M27.1 8H15v7z" fill="#ffcd40"/><circle cx="15" cy="15" r="6.5" fill="#fff"/><circle cx="15" cy="15" r="5" fill="#1a73e8"/></svg>
<svg style="position:absolute;left:1267px;top:1027px;" width="20" height="20" viewBox="0 0 25 25"><defs><clipPath id="av4"><circle cx="12.5" cy="12.5" r="12.5"/></clipPath></defs><g clip-path="url(#av4)"><rect width="25" height="25" fill="#d9d9d9"/><rect x="0" y="0" width="8" height="9" fill="#9a9a9a"/><rect x="16" y="3" width="9" height="6" fill="#f0f0f0"/><rect x="17" y="5" width="5" height="2" fill="#d66"/><rect x="0" y="11" width="25" height="1.6" fill="#333"/><rect x="0" y="13" width="9" height="3" fill="#f2f2f2"/><rect x="17" y="14" width="8" height="2.5" fill="#f5f5f5"/><rect x="0" y="17" width="25" height="1.5" fill="#222"/><path d="M8 6c1-3 4-4 6.5-3.5 2.5.5 3.5 3 3.5 5.5l.5 9H9z" fill="#1b1613"/><ellipse cx="14" cy="10.5" rx="3" ry="3.8" fill="#a98068"/><path d="M3 25c0-5 3-8.5 8-8.5h5c5 0 7 3.5 7 8.5z" fill="#0e0e0e"/><rect x="10" y="20.5" width="7" height="2.4" fill="#d2d2d2"/></g><circle cx="10" cy="10" r="9.5" fill="none" stroke="#fff" stroke-width="1.2"/></svg>
<svg style="position:absolute;left:1305px;top:1036px;" width="31" height="29" viewBox="0 0 31 29"><rect x="9" y="1" width="21" height="27" rx="2" fill="#21a366"/><rect x="9" y="10" width="21" height="9" fill="#107c41"/><rect x="9" y="19" width="21" height="9" fill="#185c37"/><rect x="1" y="6" width="17" height="17" rx="2" fill="#107c41"/><path d="M5 10l8 9M13 10l-8 9" stroke="#fff" stroke-width="2.3"/></svg>
<svg style="position:absolute;left:1360px;top:1036px;" width="31" height="30" viewBox="0 0 31 30"><rect x="3" y="3" width="17" height="17" fill="none" stroke="#e81123" stroke-width="2" stroke-dasharray="3 2"/><path d="M13 13l10 10M23 13L13 23" stroke="#1a73e8" stroke-width="2.2"/><circle cx="25" cy="25" r="3" fill="none" stroke="#1a73e8" stroke-width="2"/><circle cx="25" cy="11" r="3" fill="none" stroke="#1a73e8" stroke-width="2"/></svg>
<div style="position:absolute;left:877px;top:1070px;width:6px;height:3px;background:#8a8f98;border-radius:2px"></div>
<div style="position:absolute;left:987px;top:1070px;width:6px;height:3px;background:#8a8f98;border-radius:2px"></div>
<div style="position:absolute;left:1042px;top:1070px;width:6px;height:3px;background:#8a8f98;border-radius:2px"></div>
<div style="position:absolute;left:1097px;top:1070px;width:6px;height:3px;background:#8a8f98;border-radius:2px"></div>
<div style="position:absolute;left:1262px;top:1070px;width:6px;height:3px;background:#8a8f98;border-radius:2px"></div>
<div style="position:absolute;left:1317px;top:1070px;width:6px;height:3px;background:#8a8f98;border-radius:2px"></div>
<div style="position:absolute;left:1372px;top:1070px;width:6px;height:3px;background:#8a8f98;border-radius:2px"></div>
<svg style="position:absolute;left:1586px;top:1045px;" width="15" height="9" viewBox="0 0 15 9"><path d="M1.5 8L7.5 2l6 6" stroke="#1a1a1a" stroke-width="1.6" fill="none"/></svg>
<svg style="position:absolute;left:1622px;top:1040px;" width="24" height="20" viewBox="0 0 24 20"><path d="M5.5 15.5a4 4 0 0 1-.3-8 6 6 0 0 1 11.3-1.5 4.6 4.6 0 0 1 4.5 5.5 3 3 0 0 1-1 4z" fill="#f4f6f8" stroke="#333" stroke-width="1.5"/><circle cx="17.5" cy="14.5" r="5" fill="#e6eef7"/><path d="M14.8 13.5a3 3 0 0 1 5.2-1.5M20.3 15.5a3 3 0 0 1-5.2 1.5" stroke="#0a6cd6" stroke-width="1.6" fill="none"/><path d="M20.5 10.5v2h-2M14.5 18.5v-2h2" stroke="#0a6cd6" stroke-width="1.3" fill="none"/></svg>
<div class="t" style="left:1665px;top:1030px;width:30px;height:20px;color:#1a1a1a;font:13.2px/20px 'Liberation Sans';text-align:center">VIE</div>
<div class="t" style="left:1665px;top:1050px;width:30px;height:20px;color:#1a1a1a;font:13.2px/20px 'Liberation Sans';text-align:center">TL</div>
<svg style="position:absolute;left:1717px;top:1040px;" width="22" height="18" viewBox="0 0 22 18"><path d="M2 7a13 13 0 0 1 18 0M5 10.5a8.5 8.5 0 0 1 12 0M8 14a4 4 0 0 1 6 0" stroke="#1a1a1a" stroke-width="1.7" fill="none"/><circle cx="11" cy="16.5" r="1.4" fill="#1a1a1a"/></svg>
<svg style="position:absolute;left:1747px;top:1040px;" width="22" height="20" viewBox="0 0 22 20"><path d="M2 7h4l5-4v14l-5-4H2z" stroke="#1a1a1a" stroke-width="1.5" fill="none" stroke-linejoin="round"/><path d="M14 7.5l5 5M19 7.5l-5 5" stroke="#1a1a1a" stroke-width="1.4"/></svg>
<svg style="position:absolute;left:1776px;top:1039px;" width="23" height="22" viewBox="0 0 23 22"><rect x="2" y="7" width="16" height="10" rx="2" stroke="#1a1a1a" stroke-width="1.5" fill="none"/><rect x="18.5" y="10" width="2" height="4" fill="#1a1a1a"/><path d="M7 3L4 10h3l-2 6" stroke="#1a1a1a" stroke-width="1.4" fill="none"/></svg>
<div class="t" style="left:1820px;top:1030px;width:76px;height:20px;color:#1a1a1a;font:15px/20px 'Liberation Sans';text-align:right">3:32 CH</div>
<div class="t" style="left:1812px;top:1050px;width:84px;height:20px;color:#1a1a1a;font:15px/20px 'Liberation Sans';text-align:right">30/07/2025</div></body></html>
